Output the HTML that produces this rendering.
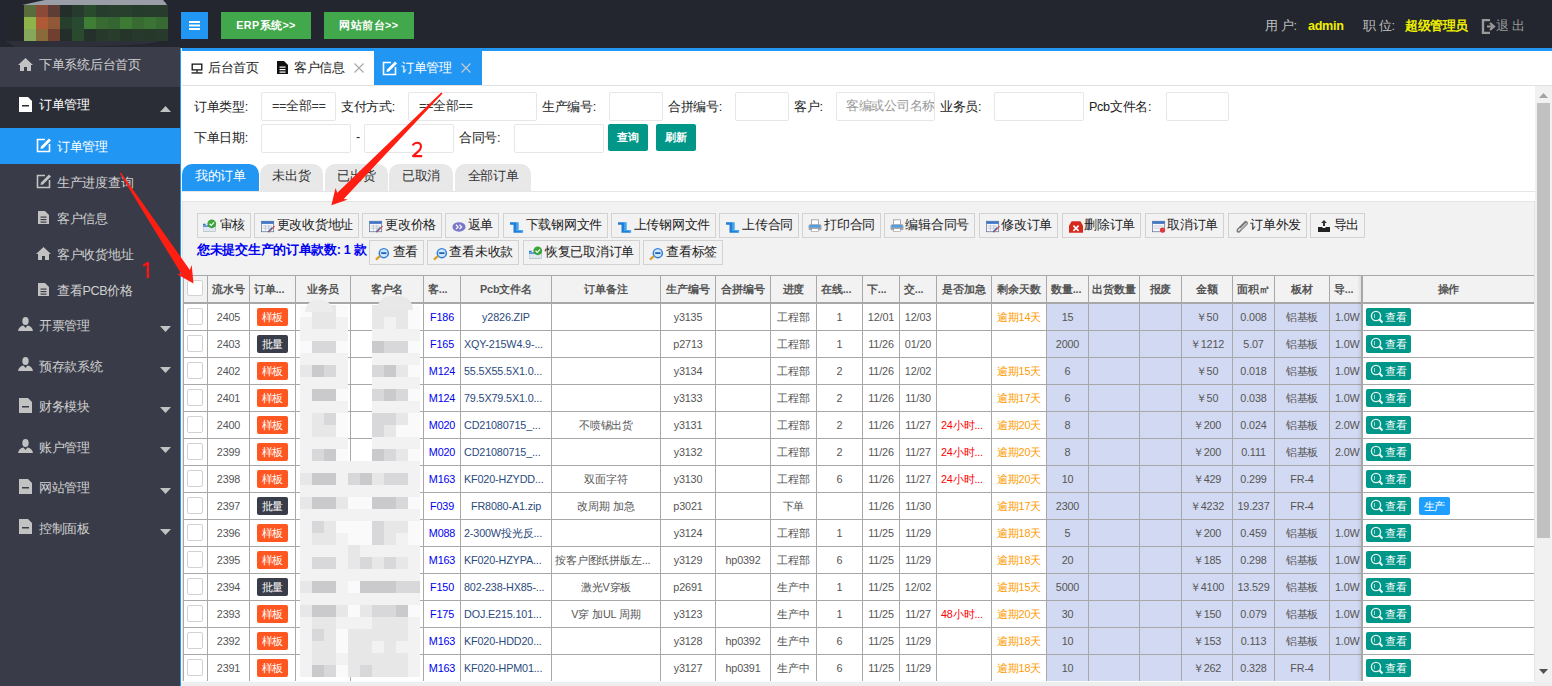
<!DOCTYPE html><html><head><meta charset="utf-8"><style>
*{box-sizing:border-box;margin:0;padding:0}
html,body{width:1552px;height:686px;overflow:hidden;background:#fff;font-family:"Liberation Sans",sans-serif;color:#333;letter-spacing:-0.3px}
.a{position:absolute}
#hdr{left:0;top:0;width:1552px;height:47px;background:#23262e}
.hb{top:12px;height:27px;background:#41a84c;color:#fff;font-size:10.8px;font-weight:bold;letter-spacing:0.4px;text-align:center;line-height:27px}
#side{left:0;top:47px;width:180px;height:639px;background:#393c48}
.si{left:0;width:180px;color:#d0d0d0;font-size:12.6px}
.si span{position:absolute;white-space:nowrap}
#main{left:180px;top:47px;width:1372px;height:639px;background:#fff}
.lbl{font-size:12.6px;color:#222;white-space:nowrap}
.inp{border-radius:2px;border:1px solid #e6e6e6;background:#fff;height:28px;font-size:12.6px;line-height:26px;white-space:nowrap;overflow:hidden}
.tb{height:25px;border:1px solid #d2d2d2;background:#f2f2f2;font-size:12.6px;color:#222;line-height:23px;white-space:nowrap}
.tb svg{position:absolute;left:5px;top:4px}
.tb span{position:absolute;top:0}
.cell{position:absolute;text-align:center;font-size:10.8px;letter-spacing:-0.15px;white-space:nowrap;overflow:hidden;color:#555}
</style></head><body><div id="hdr" class="a">
<svg class="a" style="left:0;top:0" width="180" height="47">
<path d="M5 41 L160 41 Q150 46 60 47 L15 47 Z" fill="#2d3039"/>
<path d="M22 5 L45 0 L163 0 Q166 3 167 5 Z" fill="#9a9ea6"/>
<rect x="12" y="5" width="12" height="12" fill="#23262e"/>
<rect x="24" y="5" width="12" height="12" fill="#5a6b3c"/>
<rect x="36" y="5" width="12" height="12" fill="#8b4a38"/>
<rect x="48" y="5" width="12" height="12" fill="#5e3d36"/>
<rect x="60" y="5" width="12" height="12" fill="#232e2a"/>
<rect x="72" y="5" width="12" height="12" fill="#263b2e"/>
<rect x="84" y="5" width="12" height="12" fill="#2a4a2e"/>
<rect x="96" y="5" width="12" height="12" fill="#263c2c"/>
<rect x="108" y="5" width="12" height="12" fill="#283f2d"/>
<rect x="120" y="5" width="12" height="12" fill="#283f2e"/>
<rect x="132" y="5" width="12" height="12" fill="#263b2c"/>
<rect x="144" y="5" width="12" height="12" fill="#273c2c"/>
<rect x="156" y="5" width="12" height="12" fill="#273c2c"/>
<rect x="12" y="17" width="12" height="12" fill="#23272a"/>
<rect x="24" y="17" width="12" height="12" fill="#8db34a"/>
<rect x="36" y="17" width="12" height="12" fill="#b05a35"/>
<rect x="48" y="17" width="12" height="12" fill="#915838"/>
<rect x="60" y="17" width="12" height="12" fill="#263f2d"/>
<rect x="72" y="17" width="12" height="12" fill="#284a30"/>
<rect x="84" y="17" width="12" height="12" fill="#3e7f35"/>
<rect x="96" y="17" width="12" height="12" fill="#376b32"/>
<rect x="108" y="17" width="12" height="12" fill="#356631"/>
<rect x="120" y="17" width="12" height="12" fill="#3d7b35"/>
<rect x="132" y="17" width="12" height="12" fill="#376b32"/>
<rect x="144" y="17" width="12" height="12" fill="#3a7334"/>
<rect x="156" y="17" width="12" height="12" fill="#376a32"/>
<rect x="12" y="29" width="12" height="12" fill="#23262b"/>
<rect x="24" y="29" width="12" height="12" fill="#85a85a"/>
<rect x="36" y="29" width="12" height="12" fill="#8b6a3a"/>
<rect x="48" y="29" width="12" height="12" fill="#713f30"/>
<rect x="60" y="29" width="12" height="12" fill="#232e2a"/>
<rect x="72" y="29" width="12" height="12" fill="#2a4a2e"/>
<rect x="84" y="29" width="12" height="12" fill="#24312a"/>
<rect x="96" y="29" width="12" height="12" fill="#27392b"/>
<rect x="108" y="29" width="12" height="12" fill="#283d2c"/>
<rect x="120" y="29" width="12" height="12" fill="#25352a"/>
<rect x="132" y="29" width="12" height="12" fill="#27392b"/>
<rect x="144" y="29" width="12" height="12" fill="#263829"/>
<rect x="156" y="29" width="12" height="12" fill="#273a2b"/>
</svg>
<div class="a" style="left:181px;top:12px;width:27px;height:27px;background:#2196f3"><svg class="a" style="left:8px;top:8px" width="11" height="11"><rect x="0" y="1" width="11" height="2" fill="#fff"/><rect x="0" y="4.5" width="11" height="2" fill="#fff"/><rect x="0" y="8" width="11" height="2" fill="#fff"/></svg></div>
<div class="a hb" style="left:221px;width:90px">ERP系统&gt;&gt;</div>
<div class="a hb" style="left:324px;width:90px">网站前台&gt;&gt;</div>
<div class="a" style="left:1265px;top:17px;font-size:12.6px;color:#c2c2c2;white-space:nowrap;line-height:18px">用 户:</div>
<div class="a" style="left:1308px;top:17px;font-size:12.6px;font-weight:bold;color:#f0f000;white-space:nowrap;line-height:18px">admin</div>
<div class="a" style="left:1363px;top:17px;font-size:12.6px;color:#c2c2c2;white-space:nowrap;line-height:18px">职 位:</div>
<div class="a" style="left:1405px;top:17px;font-size:12.6px;font-weight:bold;color:#f0f000;white-space:nowrap;line-height:18px;letter-spacing:-0.4px">超级管理员</div>
<svg class="a" style="left:1481px;top:19px" width="15" height="15"><path d="M9 1 H2 V14 H9" fill="none" stroke="#9a9a9a" stroke-width="2.4"/><path d="M6 7.5 H11 M9 4 L13 7.5 L9 11" fill="none" stroke="#9a9a9a" stroke-width="2.2"/></svg>
<div class="a" style="left:1496px;top:17px;font-size:12.6px;color:#9a9a9a;white-space:nowrap;line-height:18px">退 出</div>
</div>
<div id="side" class="a">
<div class="a" style="left:0;top:0;width:180px;height:40px;background:#3b3e4a"></div>
<div class="a" style="left:0;top:40px;width:180px;height:41px;background:#2a2d36"></div>
<div class="a" style="left:0;top:81px;width:180px;height:36px;background:#2196f3"></div>
<svg class="a" style="left:18px;top:11px" width="15" height="13"><path d="M7.5 0 L15 7 L13 7 L13 13 L9 13 L9 9 L6 9 L6 13 L2 13 L2 7 L0 7 Z" fill="#c2c2c2"/></svg>
<div class="a si" style="top:0;height:40px"><span style="left:39px;top:10px">下单系统后台首页</span></div>
<svg class="a" style="left:19px;top:50px" width="13" height="15"><path d="M0 0 H9 L13 4 V15 H0 Z" fill="#fff"/><rect x="3" y="8" width="7" height="1.5" fill="#2a2d36"/></svg>
<div class="a si" style="top:40px;height:40px;color:#fff"><span style="left:39px;top:10px">订单管理</span></div>
<svg class="a" style="left:160px;top:59px" width="11" height="6"><path d="M0 6 L5.5 0 L11 6 Z" fill="#c2c2c2"/></svg>
<svg class="a" style="left:36px;top:91px" width="15" height="15"><path d="M9 1.5 H1.5 V13.5 H13.5 V6" fill="none" stroke="#fff" stroke-width="1.6"/><path d="M13 0.5 L15 2.5 L7 10.5 L4.5 11 L5 8.5 Z" fill="#fff"/></svg>
<div class="a si" style="top:81px;height:36px;color:#fff"><span style="left:57px;top:11px">订单管理</span></div>
<svg class="a" style="left:36px;top:127px" width="15" height="15"><path d="M9 1.5 H1.5 V13.5 H13.5 V6" fill="none" stroke="#c2c2c2" stroke-width="1.6"/><path d="M13 0.5 L15 2.5 L7 10.5 L4.5 11 L5 8.5 Z" fill="#c2c2c2"/></svg>
<div class="a si" style="top:117px;height:36px"><span style="left:57px;top:11px">生产进度查询</span></div>
<svg class="a" style="left:38px;top:164px" width="11" height="13"><path d="M0 0 H7 L11 4 V13 H0 Z" fill="#c2c2c2"/><rect x="2.5" y="5.5" width="6" height="1.2" fill="#393c48"/><rect x="2.5" y="8" width="6" height="1.2" fill="#393c48"/><rect x="2.5" y="10.5" width="6" height="1.2" fill="#393c48"/></svg>
<div class="a si" style="top:153px;height:36px"><span style="left:57px;top:11px">客户信息</span></div>
<svg class="a" style="left:36px;top:200px" width="15" height="13"><path d="M7.5 0 L15 7 L13 7 L13 13 L9 13 L9 9 L6 9 L6 13 L2 13 L2 7 L0 7 Z" fill="#c2c2c2"/></svg>
<div class="a si" style="top:189px;height:36px"><span style="left:57px;top:11px">客户收货地址</span></div>
<svg class="a" style="left:38px;top:236px" width="11" height="13"><path d="M0 0 H7 L11 4 V13 H0 Z" fill="#c2c2c2"/><rect x="2.5" y="5.5" width="6" height="1.2" fill="#393c48"/><rect x="2.5" y="8" width="6" height="1.2" fill="#393c48"/><rect x="2.5" y="10.5" width="6" height="1.2" fill="#393c48"/></svg>
<div class="a si" style="top:225px;height:36px"><span style="left:57px;top:11px">查看PCB价格</span></div>
<svg class="a" style="left:18px;top:270px" width="15" height="14"><ellipse cx="7.5" cy="4" rx="3.2" ry="4" fill="#c2c2c2"/><path d="M0 14 Q1 9 5.5 8.5 L7.5 11 L9.5 8.5 Q14 9 15 14 Z" fill="#c2c2c2"/></svg>
<div class="a si" style="top:261.0px;height:40px"><span style="left:39px;top:10px">开票管理</span></div>
<svg class="a" style="left:160px;top:279px" width="11" height="6"><path d="M0 0 L11 0 L5.5 6 Z" fill="#c2c2c2"/></svg>
<svg class="a" style="left:18px;top:310px" width="15" height="14"><ellipse cx="7.5" cy="4" rx="3.2" ry="4" fill="#c2c2c2"/><path d="M0 14 Q1 9 5.5 8.5 L7.5 11 L9.5 8.5 Q14 9 15 14 Z" fill="#c2c2c2"/></svg>
<div class="a si" style="top:301.5px;height:40px"><span style="left:39px;top:10px">预存款系统</span></div>
<svg class="a" style="left:160px;top:320px" width="11" height="6"><path d="M0 0 L11 0 L5.5 6 Z" fill="#c2c2c2"/></svg>
<svg class="a" style="left:19px;top:351px" width="13" height="15"><path d="M0 0 H9 L13 4 V15 H0 Z" fill="#c2c2c2"/><rect x="3" y="8" width="7" height="1.5" fill="#393c48"/></svg>
<div class="a si" style="top:342.0px;height:40px"><span style="left:39px;top:10px">财务模块</span></div>
<svg class="a" style="left:160px;top:360px" width="11" height="6"><path d="M0 0 L11 0 L5.5 6 Z" fill="#c2c2c2"/></svg>
<svg class="a" style="left:18px;top:392px" width="15" height="14"><ellipse cx="7.5" cy="4" rx="3.2" ry="4" fill="#c2c2c2"/><path d="M0 14 Q1 9 5.5 8.5 L7.5 11 L9.5 8.5 Q14 9 15 14 Z" fill="#c2c2c2"/></svg>
<div class="a si" style="top:382.5px;height:40px"><span style="left:39px;top:10px">账户管理</span></div>
<svg class="a" style="left:160px;top:400px" width="11" height="6"><path d="M0 0 L11 0 L5.5 6 Z" fill="#c2c2c2"/></svg>
<svg class="a" style="left:19px;top:432px" width="13" height="15"><path d="M0 0 H9 L13 4 V15 H0 Z" fill="#c2c2c2"/><rect x="3" y="8" width="7" height="1.5" fill="#393c48"/></svg>
<div class="a si" style="top:423.0px;height:40px"><span style="left:39px;top:10px">网站管理</span></div>
<svg class="a" style="left:160px;top:441px" width="11" height="6"><path d="M0 0 L11 0 L5.5 6 Z" fill="#c2c2c2"/></svg>
<svg class="a" style="left:19px;top:472px" width="13" height="15"><path d="M0 0 H9 L13 4 V15 H0 Z" fill="#c2c2c2"/><rect x="3" y="8" width="7" height="1.5" fill="#393c48"/></svg>
<div class="a si" style="top:463.5px;height:40px"><span style="left:39px;top:10px">控制面板</span></div>
<svg class="a" style="left:160px;top:482px" width="11" height="6"><path d="M0 0 L11 0 L5.5 6 Z" fill="#c2c2c2"/></svg>
</div>
<div class="a" style="left:180px;top:47px;width:1372px;height:1px;background:#23262e"></div>
<div class="a" style="left:180px;top:48px;width:1px;height:638px;background:#2196f3"></div>
<div class="a" style="left:182px;top:48px;width:1370px;height:3px;background:#2196f3"></div>
<div class="a" style="left:182px;top:85px;width:1370px;height:1px;background:#e2e2e2"></div>
<svg class="a" style="left:191px;top:63px" width="12" height="11"><path d="M1.2 1.2 H10.8 V6.8 H1.2 Z" fill="none" stroke="#111" stroke-width="1.3"/><path d="M6 7 V9.5" stroke="#111" stroke-width="1.2"/><rect x="0.5" y="9.3" width="11" height="1.3" fill="#111"/></svg>
<div class="a" style="left:208px;top:59px;font-size:12.6px;color:#1a1a1a;white-space:nowrap;margin-top:1px">后台首页</div>
<svg class="a" style="left:277px;top:61px" width="11" height="13"><path d="M0 0 H7 L11 4 V13 H0 Z" fill="#111"/><rect x="2.5" y="5.5" width="6" height="1.2" fill="#fff"/><rect x="2.5" y="8" width="6" height="1.2" fill="#fff"/><rect x="2.5" y="10.5" width="6" height="1.2" fill="#fff"/></svg>
<div class="a" style="left:294px;top:59px;font-size:12.6px;color:#1a1a1a;white-space:nowrap;margin-top:1px">客户信息</div>
<svg class="a" style="left:354px;top:63px" width="10" height="10"><path d="M0.5 0.5 L9.5 9.5 M9.5 0.5 L0.5 9.5" stroke="#aaa" stroke-width="1.2"/></svg>
<div class="a" style="left:374px;top:51px;width:108px;height:34px;background:#2196f3"></div>
<svg class="a" style="left:382px;top:61px" width="15" height="15"><path d="M9 1.5 H1.5 V13.5 H13.5 V6" fill="none" stroke="#fff" stroke-width="1.6"/><path d="M13 0.5 L15 2.5 L7 10.5 L4.5 11 L5 8.5 Z" fill="#fff"/></svg>
<div class="a" style="left:401px;top:59px;font-size:12.6px;color:#fff;white-space:nowrap;margin-top:1px">订单管理</div>
<svg class="a" style="left:461px;top:63px" width="10" height="10"><path d="M0.5 0.5 L9.5 9.5 M9.5 0.5 L0.5 9.5" stroke="#c4cbd2" stroke-width="1.2"/></svg>
<div class="a lbl" style="left:194px;top:99px">订单类型:</div>
<div class="a inp" style="left:261px;top:92px;width:75px;height:29px;color:#333;padding-left:10px">==全部==</div>
<div class="a lbl" style="left:341px;top:99px">支付方式:</div>
<div class="a inp" style="left:408px;top:92px;width:129px;height:29px;color:#333;padding-left:10px">==全部==</div>
<div class="a lbl" style="left:542px;top:99px">生产编号:</div>
<div class="a inp" style="left:609px;top:92px;width:54px;height:29px;color:#333;padding-left:8px"></div>
<div class="a lbl" style="left:668px;top:99px">合拼编号:</div>
<div class="a inp" style="left:735px;top:92px;width:54px;height:29px;color:#333;padding-left:8px"></div>
<div class="a lbl" style="left:794px;top:99px">客户:</div>
<div class="a inp" style="left:836px;top:92px;width:99px;height:29px;color:#999;padding-left:9px">客编或公司名称</div>
<div class="a lbl" style="left:940px;top:99px">业务员:</div>
<div class="a inp" style="left:994px;top:92px;width:90px;height:29px;color:#333;padding-left:8px"></div>
<div class="a lbl" style="left:1089px;top:99px">Pcb文件名:</div>
<div class="a inp" style="left:1166px;top:92px;width:63px;height:29px;color:#333;padding-left:8px"></div>
<div class="a lbl" style="left:194px;top:130px">下单日期:</div>
<div class="a inp" style="left:261px;top:124px;width:90px;height:29px;color:#333;padding-left:8px"></div>
<div class="a lbl" style="left:356px;top:130px">-</div>
<div class="a inp" style="left:364px;top:124px;width:90px;height:29px;color:#333;padding-left:8px"></div>
<div class="a lbl" style="left:459px;top:130px">合同号:</div>
<div class="a inp" style="left:514px;top:124px;width:90px;height:29px;color:#333;padding-left:8px"></div>
<div class="a" style="left:608px;top:124px;width:40px;height:27px;background:#009688;border-radius:2px;color:#fff;font-size:11px;font-weight:bold;text-align:center;line-height:27px">查询</div>
<div class="a" style="left:656px;top:124px;width:40px;height:27px;background:#009688;border-radius:2px;color:#fff;font-size:11px;font-weight:bold;text-align:center;line-height:27px">刷新</div>
<div class="a" style="left:182px;top:191px;width:1353px;height:1px;background:#e6e6e6"></div>
<div class="a" style="left:182px;top:164px;width:77px;height:27px;background:#2196f3;border-radius:10px 10px 0 0;color:#fff;font-size:12.6px;text-align:center;line-height:25px">我的订单</div>
<div class="a" style="left:260px;top:164px;width:63px;height:27px;background:#e8e8e8;border-radius:10px 10px 0 0;color:#333;font-size:12.6px;text-align:center;line-height:25px">未出货</div>
<div class="a" style="left:325px;top:164px;width:63px;height:27px;background:#e8e8e8;border-radius:10px 10px 0 0;color:#333;font-size:12.6px;text-align:center;line-height:25px">已出货</div>
<div class="a" style="left:389px;top:164px;width:64px;height:27px;background:#e8e8e8;border-radius:10px 10px 0 0;color:#333;font-size:12.6px;text-align:center;line-height:25px">已取消</div>
<div class="a" style="left:455px;top:164px;width:76px;height:27px;background:#e8e8e8;border-radius:10px 10px 0 0;color:#333;font-size:12.6px;text-align:center;line-height:25px">全部订单</div>
<div class="a" style="left:182px;top:201px;width:1353px;height:481px;background:#f2f2f2;border:1px solid #e4e4e4;border-bottom:0"></div>
<div class="a tb" style="left:197px;top:213px;width:54px"><svg class="a" style="left:5px;top:5px" width="14" height="13" viewBox="0 0 16 14"><rect x="0" y="5" width="3" height="2" fill="#2a7bd6"/><rect x="0" y="7" width="14" height="7" fill="#dfe7f0" stroke="#9aa" stroke-width="0.6"/><rect x="0" y="7" width="14" height="1.5" fill="#3a86d8"/><circle cx="10" cy="5" r="5" fill="#3aa53a"/><path d="M7.5 5 L9.5 7 L12.5 3.5" stroke="#fff" stroke-width="1.3" fill="none"/></svg><span style="right:5px">审核</span></div>
<div class="a tb" style="left:254px;top:213px;width:105px"><svg class="a" style="left:6px;top:6px" width="14" height="13" viewBox="0 0 16 14"><rect x="0.5" y="1" width="14" height="12" fill="#f4f6fa" stroke="#5a6f90" stroke-width="0.8"/><rect x="0.5" y="1" width="14" height="3" fill="#3f75c4"/><path d="M2 6.5 H13 M2 9 H13 M5 5 V12 M9 5 V12" stroke="#aab" stroke-width="0.6"/><path d="M8 13 L15 6 L16 7 L9 14 Z" fill="#e04a2a"/><path d="M8 13 L13 8" stroke="#2a6ad0" stroke-width="1.2"/></svg><span style="right:5px">更改收货地址</span></div>
<div class="a tb" style="left:362px;top:213px;width:80px"><svg class="a" style="left:6px;top:6px" width="14" height="13" viewBox="0 0 16 14"><rect x="0.5" y="1" width="14" height="12" fill="#f4f6fa" stroke="#5a6f90" stroke-width="0.8"/><rect x="0.5" y="1" width="14" height="3" fill="#3f75c4"/><path d="M2 6.5 H13 M2 9 H13 M5 5 V12 M9 5 V12" stroke="#aab" stroke-width="0.6"/><path d="M8 13 L15 6 L16 7 L9 14 Z" fill="#e04a2a"/><path d="M8 13 L13 8" stroke="#2a6ad0" stroke-width="1.2"/></svg><span style="right:5px">更改价格</span></div>
<div class="a tb" style="left:445px;top:213px;width:54px"><svg class="a" style="left:6px;top:7px" width="14" height="11" viewBox="0 0 16 12"><ellipse cx="8" cy="6.5" rx="7.5" ry="5.5" fill="#7a76c8"/><path d="M4.5 4 L7 6.5 L4.5 9 M8.5 4 L11 6.5 L8.5 9" stroke="#fff" stroke-width="1.4" fill="none"/></svg><span style="right:5px">返单</span></div>
<div class="a tb" style="left:503px;top:213px;width:105px"><svg class="a" style="left:6px;top:6px" width="14" height="13" viewBox="0 0 16 14"><path d="M0 2 H8 V12 H14 V14 H4 V5 H0 Z" fill="#1e7fd8"/><path d="M7 2 H10 V11 H15 V14 H13 V12 H7 Z" fill="#47a6f0"/></svg><span style="right:5px">下载钢网文件</span></div>
<div class="a tb" style="left:611px;top:213px;width:105px"><svg class="a" style="left:6px;top:6px" width="14" height="13" viewBox="0 0 16 14"><path d="M0 2 H8 V12 H14 V14 H4 V5 H0 Z" fill="#1e7fd8"/><path d="M7 2 H10 V11 H15 V14 H13 V12 H7 Z" fill="#47a6f0"/></svg><span style="right:5px">上传钢网文件</span></div>
<div class="a tb" style="left:719px;top:213px;width:80px"><svg class="a" style="left:6px;top:6px" width="14" height="13" viewBox="0 0 16 14"><path d="M0 2 H8 V12 H14 V14 H4 V5 H0 Z" fill="#1e7fd8"/><path d="M7 2 H10 V11 H15 V14 H13 V12 H7 Z" fill="#47a6f0"/></svg><span style="right:5px">上传合同</span></div>
<div class="a tb" style="left:802px;top:213px;width:79px"><svg class="a" style="left:5px;top:5px" width="14" height="13" viewBox="0 0 16 15"><rect x="4" y="1" width="8" height="6" fill="#fff" stroke="#888" stroke-width="0.8"/><rect x="0.5" y="6" width="15" height="7" rx="2" fill="#9aa4b0"/><rect x="2" y="7" width="12" height="2.5" fill="#48a0e8"/><rect x="4" y="11" width="8" height="3.5" fill="#fff" stroke="#888" stroke-width="0.6"/></svg><span style="right:5px">打印合同</span></div>
<div class="a tb" style="left:884px;top:213px;width:91px"><svg class="a" style="left:5px;top:5px" width="14" height="13" viewBox="0 0 16 15"><rect x="4" y="1" width="8" height="6" fill="#fff" stroke="#888" stroke-width="0.8"/><rect x="0.5" y="6" width="15" height="7" rx="2" fill="#9aa4b0"/><rect x="2" y="7" width="12" height="2.5" fill="#48a0e8"/><rect x="4" y="11" width="8" height="3.5" fill="#fff" stroke="#888" stroke-width="0.6"/></svg><span style="right:5px">编辑合同号</span></div>
<div class="a tb" style="left:979px;top:213px;width:79px"><svg class="a" style="left:6px;top:6px" width="14" height="13" viewBox="0 0 16 14"><rect x="0.5" y="1" width="14" height="12" fill="#f4f6fa" stroke="#5a6f90" stroke-width="0.8"/><rect x="0.5" y="1" width="14" height="3" fill="#3f75c4"/><path d="M2 6.5 H13 M2 9 H13 M5 5 V12 M9 5 V12" stroke="#aab" stroke-width="0.6"/><path d="M8 13 L15 6 L16 7 L9 14 Z" fill="#e04a2a"/><path d="M8 13 L13 8" stroke="#2a6ad0" stroke-width="1.2"/></svg><span style="right:5px">修改订单</span></div>
<div class="a tb" style="left:1062px;top:213px;width:79px"><svg class="a" style="left:6px;top:6px" width="14" height="13" viewBox="0 0 16 14"><path d="M0 6 L3 1 H13 L16 6 V14 H0 Z" fill="#d8271b"/><path d="M5 6 L11 12 M11 6 L5 12" stroke="#fff" stroke-width="1.8"/></svg><span style="right:5px">删除订单</span></div>
<div class="a tb" style="left:1145px;top:213px;width:79px"><svg class="a" style="left:6px;top:6px" width="14" height="13" viewBox="0 0 16 14"><rect x="0.5" y="1" width="14" height="12" fill="#f4f6fa" stroke="#5a6f90" stroke-width="0.8"/><rect x="0.5" y="1" width="14" height="3" fill="#3f75c4"/><path d="M2 6.5 H13 M2 9 H13" stroke="#aab" stroke-width="0.6"/><circle cx="12" cy="11" r="3" fill="#e03a3a"/></svg><span style="right:5px">取消订单</span></div>
<div class="a tb" style="left:1228px;top:213px;width:79px"><svg class="a" style="left:6px;top:5px" width="15" height="15"><path d="M11 2 L3 10 Q1 13 4 13 L12 5 Q13 3 11 3 L5 9" fill="none" stroke="#777" stroke-width="1.4"/><path d="M13 4 L6 11" stroke="#999" stroke-width="1"/></svg><span style="right:5px">订单外发</span></div>
<div class="a tb" style="left:1310px;top:213px;width:55px"><svg class="a" style="left:7px;top:6px" width="12" height="12"><path d="M6 0 L9 3 H7 V6 H5 V3 H3 Z" fill="#333"/><path d="M0 7 H4 L5 8 H7 L8 7 H12 V12 H0 Z" fill="#222"/></svg><span style="right:5px">导出</span></div>
<div class="a" style="left:197px;top:241px;font-size:12.6px;font-weight:bold;color:#0000f0;white-space:nowrap;line-height:18px">您未提交生产的订单款数: 1 款</div>
<div class="a tb" style="left:369px;top:240px;width:55px"><svg class="a" style="left:5px;top:6px" width="15" height="14" viewBox="0 0 17 16"><circle cx="10" cy="7" r="6" fill="#2f7ed8"/><circle cx="10" cy="7" r="4.3" fill="#cfe6fb"/><rect x="7" y="6" width="6" height="2" fill="#1f5fb8"/><path d="M1 14.5 L5.5 10.5" stroke="#d9a02a" stroke-width="2.6"/></svg><span style="right:5px">查看</span></div>
<div class="a tb" style="left:427px;top:240px;width:92px"><svg class="a" style="left:5px;top:6px" width="15" height="14" viewBox="0 0 17 16"><circle cx="10" cy="7" r="6" fill="#2f7ed8"/><circle cx="10" cy="7" r="4.3" fill="#cfe6fb"/><rect x="7" y="6" width="6" height="2" fill="#1f5fb8"/><path d="M1 14.5 L5.5 10.5" stroke="#d9a02a" stroke-width="2.6"/></svg><span style="right:5px">查看未收款</span></div>
<div class="a tb" style="left:523px;top:240px;width:117px"><svg class="a" style="left:5px;top:5px" width="14" height="13" viewBox="0 0 16 14"><rect x="0" y="5" width="3" height="2" fill="#2a7bd6"/><rect x="0" y="7" width="14" height="7" fill="#dfe7f0" stroke="#9aa" stroke-width="0.6"/><rect x="0" y="7" width="14" height="1.5" fill="#3a86d8"/><circle cx="10" cy="5" r="5" fill="#3aa53a"/><path d="M7.5 5 L9.5 7 L12.5 3.5" stroke="#fff" stroke-width="1.3" fill="none"/></svg><span style="right:5px">恢复已取消订单</span></div>
<div class="a tb" style="left:643px;top:240px;width:80px"><svg class="a" style="left:5px;top:6px" width="15" height="14" viewBox="0 0 17 16"><circle cx="10" cy="7" r="6" fill="#2f7ed8"/><circle cx="10" cy="7" r="4.3" fill="#cfe6fb"/><rect x="7" y="6" width="6" height="2" fill="#1f5fb8"/><path d="M1 14.5 L5.5 10.5" stroke="#d9a02a" stroke-width="2.6"/></svg><span style="right:5px">查看标签</span></div>
<div class="a" style="left:183px;top:275px;width:1178px;height:28px;background:#f2f2f2"></div>
<div class="a" style="left:183px;top:303px;width:1178px;height:378px;background:#fff"></div>
<div class="a" style="left:1046px;top:303px;width:315px;height:378px;background:#d2d9f2"></div>
<div class="a" style="left:183px;top:275px;width:1178px;height:1px;background:#a8a8a8"></div>
<div class="a" style="left:183px;top:303px;width:1178px;height:1px;background:#a8a8a8"></div>
<div class="a" style="left:183px;top:330px;width:1178px;height:1px;background:#a8a8a8"></div>
<div class="a" style="left:183px;top:357px;width:1178px;height:1px;background:#a8a8a8"></div>
<div class="a" style="left:183px;top:384px;width:1178px;height:1px;background:#a8a8a8"></div>
<div class="a" style="left:183px;top:411px;width:1178px;height:1px;background:#a8a8a8"></div>
<div class="a" style="left:183px;top:438px;width:1178px;height:1px;background:#a8a8a8"></div>
<div class="a" style="left:183px;top:465px;width:1178px;height:1px;background:#a8a8a8"></div>
<div class="a" style="left:183px;top:492px;width:1178px;height:1px;background:#a8a8a8"></div>
<div class="a" style="left:183px;top:519px;width:1178px;height:1px;background:#a8a8a8"></div>
<div class="a" style="left:183px;top:546px;width:1178px;height:1px;background:#a8a8a8"></div>
<div class="a" style="left:183px;top:573px;width:1178px;height:1px;background:#a8a8a8"></div>
<div class="a" style="left:183px;top:600px;width:1178px;height:1px;background:#a8a8a8"></div>
<div class="a" style="left:183px;top:627px;width:1178px;height:1px;background:#a8a8a8"></div>
<div class="a" style="left:183px;top:654px;width:1178px;height:1px;background:#a8a8a8"></div>
<div class="a" style="left:183px;top:681px;width:1178px;height:1px;background:#a8a8a8"></div>
<div class="a" style="left:183px;top:302px;width:1178px;height:1px;background:#a8a8a8"></div>
<div class="a" style="left:183px;top:275px;width:1px;height:406px;background:#a8a8a8"></div>
<div class="a" style="left:207px;top:275px;width:1px;height:406px;background:#a8a8a8"></div>
<div class="a" style="left:249px;top:275px;width:1px;height:406px;background:#a8a8a8"></div>
<div class="a" style="left:295px;top:275px;width:1px;height:406px;background:#a8a8a8"></div>
<div class="a" style="left:350px;top:275px;width:1px;height:406px;background:#a8a8a8"></div>
<div class="a" style="left:423px;top:275px;width:1px;height:406px;background:#a8a8a8"></div>
<div class="a" style="left:460px;top:275px;width:1px;height:406px;background:#a8a8a8"></div>
<div class="a" style="left:551px;top:275px;width:1px;height:406px;background:#a8a8a8"></div>
<div class="a" style="left:660px;top:275px;width:1px;height:406px;background:#a8a8a8"></div>
<div class="a" style="left:715px;top:275px;width:1px;height:406px;background:#a8a8a8"></div>
<div class="a" style="left:770px;top:275px;width:1px;height:406px;background:#a8a8a8"></div>
<div class="a" style="left:816px;top:275px;width:1px;height:406px;background:#a8a8a8"></div>
<div class="a" style="left:862px;top:275px;width:1px;height:406px;background:#a8a8a8"></div>
<div class="a" style="left:899px;top:275px;width:1px;height:406px;background:#a8a8a8"></div>
<div class="a" style="left:936px;top:275px;width:1px;height:406px;background:#a8a8a8"></div>
<div class="a" style="left:991px;top:275px;width:1px;height:406px;background:#a8a8a8"></div>
<div class="a" style="left:1046px;top:275px;width:1px;height:406px;background:#a8a8a8"></div>
<div class="a" style="left:1088px;top:275px;width:1px;height:406px;background:#a8a8a8"></div>
<div class="a" style="left:1139px;top:275px;width:1px;height:406px;background:#a8a8a8"></div>
<div class="a" style="left:1181px;top:275px;width:1px;height:406px;background:#a8a8a8"></div>
<div class="a" style="left:1232px;top:275px;width:1px;height:406px;background:#a8a8a8"></div>
<div class="a" style="left:1274px;top:275px;width:1px;height:406px;background:#a8a8a8"></div>
<div class="a" style="left:1329px;top:275px;width:1px;height:406px;background:#a8a8a8"></div>
<div class="a" style="left:187px;top:280px;width:16px;height:16px;border:1px solid #d2d2d2;border-radius:2px;background:#fff"></div>
<div class="cell" style="left:208px;top:276px;width:41px;height:27px;line-height:27px;font-weight:bold;color:#555;text-align:center;">流水号</div>
<div class="cell" style="left:250px;top:276px;width:45px;height:27px;line-height:27px;font-weight:bold;color:#555;text-align:left;padding-left:4px;">订单...</div>
<div class="cell" style="left:296px;top:276px;width:54px;height:27px;line-height:27px;font-weight:bold;color:#555;text-align:center;">业务员</div>
<div class="cell" style="left:351px;top:276px;width:72px;height:27px;line-height:27px;font-weight:bold;color:#555;text-align:center;">客户名</div>
<div class="cell" style="left:424px;top:276px;width:36px;height:27px;line-height:27px;font-weight:bold;color:#555;text-align:left;padding-left:4px;">客...</div>
<div class="cell" style="left:461px;top:276px;width:90px;height:27px;line-height:27px;font-weight:bold;color:#555;text-align:center;">Pcb文件名</div>
<div class="cell" style="left:552px;top:276px;width:108px;height:27px;line-height:27px;font-weight:bold;color:#555;text-align:center;">订单备注</div>
<div class="cell" style="left:661px;top:276px;width:54px;height:27px;line-height:27px;font-weight:bold;color:#555;text-align:center;">生产编号</div>
<div class="cell" style="left:716px;top:276px;width:54px;height:27px;line-height:27px;font-weight:bold;color:#555;text-align:center;">合拼编号</div>
<div class="cell" style="left:771px;top:276px;width:45px;height:27px;line-height:27px;font-weight:bold;color:#555;text-align:center;">进度</div>
<div class="cell" style="left:817px;top:276px;width:45px;height:27px;line-height:27px;font-weight:bold;color:#555;text-align:left;padding-left:4px;">在线...</div>
<div class="cell" style="left:863px;top:276px;width:36px;height:27px;line-height:27px;font-weight:bold;color:#555;text-align:left;padding-left:4px;">下...</div>
<div class="cell" style="left:900px;top:276px;width:36px;height:27px;line-height:27px;font-weight:bold;color:#555;text-align:left;padding-left:4px;">交...</div>
<div class="cell" style="left:937px;top:276px;width:54px;height:27px;line-height:27px;font-weight:bold;color:#555;text-align:center;">是否加急</div>
<div class="cell" style="left:992px;top:276px;width:54px;height:27px;line-height:27px;font-weight:bold;color:#555;text-align:center;">剩余天数</div>
<div class="cell" style="left:1047px;top:276px;width:41px;height:27px;line-height:27px;font-weight:bold;color:#555;text-align:left;padding-left:4px;">数量...</div>
<div class="cell" style="left:1089px;top:276px;width:50px;height:27px;line-height:27px;font-weight:bold;color:#555;text-align:center;">出货数量</div>
<div class="cell" style="left:1140px;top:276px;width:41px;height:27px;line-height:27px;font-weight:bold;color:#555;text-align:center;">报废</div>
<div class="cell" style="left:1182px;top:276px;width:50px;height:27px;line-height:27px;font-weight:bold;color:#555;text-align:center;">金额</div>
<div class="cell" style="left:1233px;top:276px;width:41px;height:27px;line-height:27px;font-weight:bold;color:#555;text-align:center;">面积㎡</div>
<div class="cell" style="left:1275px;top:276px;width:54px;height:27px;line-height:27px;font-weight:bold;color:#555;text-align:center;">板材</div>
<div class="cell" style="left:1330px;top:276px;width:70px;height:27px;line-height:27px;font-weight:bold;color:#555;text-align:left;padding-left:4px;">导...</div>
<div class="a" style="left:187px;top:308px;width:16px;height:17px;border:1px solid #d2d2d2;border-radius:2px;background:#fff"></div>
<div class="cell" style="left:208px;top:304px;width:41px;height:26px;line-height:26px;color:#555;text-align:center;">2405</div>
<div class="a" style="left:257px;top:308px;width:31px;height:18px;background:#ff5722;border-radius:2px;color:#fff;font-size:10.8px;text-align:center;line-height:18px">样板</div>
<div class="cell" style="left:424px;top:304px;width:36px;height:26px;line-height:26px;color:#0000f0;text-align:center;">F186</div>
<div class="cell" style="left:461px;top:304px;width:90px;height:26px;line-height:26px;color:#2b4a7d;text-align:center;">y2826.ZIP</div>
<div class="cell" style="left:661px;top:304px;width:54px;height:26px;line-height:26px;color:#555;text-align:center;">y3135</div>
<div class="cell" style="left:771px;top:304px;width:45px;height:26px;line-height:26px;color:#555;text-align:center;">工程部</div>
<div class="cell" style="left:817px;top:304px;width:45px;height:26px;line-height:26px;color:#555;text-align:center;">1</div>
<div class="cell" style="left:863px;top:304px;width:36px;height:26px;line-height:26px;color:#555;text-align:center;">12/01</div>
<div class="cell" style="left:900px;top:304px;width:36px;height:26px;line-height:26px;color:#555;text-align:center;">12/03</div>
<div class="cell" style="left:992px;top:304px;width:54px;height:26px;line-height:26px;color:#ff9b00;text-align:center;">逾期14天</div>
<div class="cell" style="left:1047px;top:304px;width:41px;height:26px;line-height:26px;color:#555;text-align:center;">15</div>
<div class="cell" style="left:1182px;top:304px;width:50px;height:26px;line-height:26px;color:#555;text-align:center;">￥50</div>
<div class="cell" style="left:1233px;top:304px;width:41px;height:26px;line-height:26px;color:#555;text-align:center;">0.008</div>
<div class="cell" style="left:1275px;top:304px;width:54px;height:26px;line-height:26px;color:#555;text-align:center;">铝基板</div>
<div class="cell" style="left:1330px;top:304px;width:70px;height:26px;line-height:26px;color:#555;text-align:left;padding-left:5px;">1.0W</div>
<div class="a" style="left:187px;top:335px;width:16px;height:17px;border:1px solid #d2d2d2;border-radius:2px;background:#fff"></div>
<div class="cell" style="left:208px;top:331px;width:41px;height:26px;line-height:26px;color:#555;text-align:center;">2403</div>
<div class="a" style="left:257px;top:335px;width:31px;height:18px;background:#393d49;border-radius:2px;color:#fff;font-size:10.8px;text-align:center;line-height:18px">批量</div>
<div class="cell" style="left:424px;top:331px;width:36px;height:26px;line-height:26px;color:#0000f0;text-align:center;">F165</div>
<div class="cell" style="left:461px;top:331px;width:90px;height:26px;line-height:26px;color:#2b4a7d;text-align:left;padding-left:3px;">XQY-215W4.9-...</div>
<div class="cell" style="left:661px;top:331px;width:54px;height:26px;line-height:26px;color:#555;text-align:center;">p2713</div>
<div class="cell" style="left:771px;top:331px;width:45px;height:26px;line-height:26px;color:#555;text-align:center;">工程部</div>
<div class="cell" style="left:817px;top:331px;width:45px;height:26px;line-height:26px;color:#555;text-align:center;">1</div>
<div class="cell" style="left:863px;top:331px;width:36px;height:26px;line-height:26px;color:#555;text-align:center;">11/26</div>
<div class="cell" style="left:900px;top:331px;width:36px;height:26px;line-height:26px;color:#555;text-align:center;">01/20</div>
<div class="cell" style="left:1047px;top:331px;width:41px;height:26px;line-height:26px;color:#555;text-align:center;">2000</div>
<div class="cell" style="left:1182px;top:331px;width:50px;height:26px;line-height:26px;color:#555;text-align:center;">￥1212</div>
<div class="cell" style="left:1233px;top:331px;width:41px;height:26px;line-height:26px;color:#555;text-align:center;">5.07</div>
<div class="cell" style="left:1275px;top:331px;width:54px;height:26px;line-height:26px;color:#555;text-align:center;">铝基板</div>
<div class="cell" style="left:1330px;top:331px;width:70px;height:26px;line-height:26px;color:#555;text-align:left;padding-left:5px;">1.0W</div>
<div class="a" style="left:187px;top:362px;width:16px;height:17px;border:1px solid #d2d2d2;border-radius:2px;background:#fff"></div>
<div class="cell" style="left:208px;top:358px;width:41px;height:26px;line-height:26px;color:#555;text-align:center;">2402</div>
<div class="a" style="left:257px;top:362px;width:31px;height:18px;background:#ff5722;border-radius:2px;color:#fff;font-size:10.8px;text-align:center;line-height:18px">样板</div>
<div class="cell" style="left:424px;top:358px;width:36px;height:26px;line-height:26px;color:#0000f0;text-align:center;">M124</div>
<div class="cell" style="left:461px;top:358px;width:90px;height:26px;line-height:26px;color:#2b4a7d;text-align:left;padding-left:3px;">55.5X55.5X1.0...</div>
<div class="cell" style="left:661px;top:358px;width:54px;height:26px;line-height:26px;color:#555;text-align:center;">y3134</div>
<div class="cell" style="left:771px;top:358px;width:45px;height:26px;line-height:26px;color:#555;text-align:center;">工程部</div>
<div class="cell" style="left:817px;top:358px;width:45px;height:26px;line-height:26px;color:#555;text-align:center;">2</div>
<div class="cell" style="left:863px;top:358px;width:36px;height:26px;line-height:26px;color:#555;text-align:center;">11/26</div>
<div class="cell" style="left:900px;top:358px;width:36px;height:26px;line-height:26px;color:#555;text-align:center;">12/02</div>
<div class="cell" style="left:992px;top:358px;width:54px;height:26px;line-height:26px;color:#ff9b00;text-align:center;">逾期15天</div>
<div class="cell" style="left:1047px;top:358px;width:41px;height:26px;line-height:26px;color:#555;text-align:center;">6</div>
<div class="cell" style="left:1182px;top:358px;width:50px;height:26px;line-height:26px;color:#555;text-align:center;">￥50</div>
<div class="cell" style="left:1233px;top:358px;width:41px;height:26px;line-height:26px;color:#555;text-align:center;">0.018</div>
<div class="cell" style="left:1275px;top:358px;width:54px;height:26px;line-height:26px;color:#555;text-align:center;">铝基板</div>
<div class="cell" style="left:1330px;top:358px;width:70px;height:26px;line-height:26px;color:#555;text-align:left;padding-left:5px;">1.0W</div>
<div class="a" style="left:187px;top:389px;width:16px;height:17px;border:1px solid #d2d2d2;border-radius:2px;background:#fff"></div>
<div class="cell" style="left:208px;top:385px;width:41px;height:26px;line-height:26px;color:#555;text-align:center;">2401</div>
<div class="a" style="left:257px;top:389px;width:31px;height:18px;background:#ff5722;border-radius:2px;color:#fff;font-size:10.8px;text-align:center;line-height:18px">样板</div>
<div class="cell" style="left:424px;top:385px;width:36px;height:26px;line-height:26px;color:#0000f0;text-align:center;">M124</div>
<div class="cell" style="left:461px;top:385px;width:90px;height:26px;line-height:26px;color:#2b4a7d;text-align:left;padding-left:3px;">79.5X79.5X1.0...</div>
<div class="cell" style="left:661px;top:385px;width:54px;height:26px;line-height:26px;color:#555;text-align:center;">y3133</div>
<div class="cell" style="left:771px;top:385px;width:45px;height:26px;line-height:26px;color:#555;text-align:center;">工程部</div>
<div class="cell" style="left:817px;top:385px;width:45px;height:26px;line-height:26px;color:#555;text-align:center;">2</div>
<div class="cell" style="left:863px;top:385px;width:36px;height:26px;line-height:26px;color:#555;text-align:center;">11/26</div>
<div class="cell" style="left:900px;top:385px;width:36px;height:26px;line-height:26px;color:#555;text-align:center;">11/30</div>
<div class="cell" style="left:992px;top:385px;width:54px;height:26px;line-height:26px;color:#ff9b00;text-align:center;">逾期17天</div>
<div class="cell" style="left:1047px;top:385px;width:41px;height:26px;line-height:26px;color:#555;text-align:center;">6</div>
<div class="cell" style="left:1182px;top:385px;width:50px;height:26px;line-height:26px;color:#555;text-align:center;">￥50</div>
<div class="cell" style="left:1233px;top:385px;width:41px;height:26px;line-height:26px;color:#555;text-align:center;">0.038</div>
<div class="cell" style="left:1275px;top:385px;width:54px;height:26px;line-height:26px;color:#555;text-align:center;">铝基板</div>
<div class="cell" style="left:1330px;top:385px;width:70px;height:26px;line-height:26px;color:#555;text-align:left;padding-left:5px;">1.0W</div>
<div class="a" style="left:187px;top:416px;width:16px;height:17px;border:1px solid #d2d2d2;border-radius:2px;background:#fff"></div>
<div class="cell" style="left:208px;top:412px;width:41px;height:26px;line-height:26px;color:#555;text-align:center;">2400</div>
<div class="a" style="left:257px;top:416px;width:31px;height:18px;background:#ff5722;border-radius:2px;color:#fff;font-size:10.8px;text-align:center;line-height:18px">样板</div>
<div class="cell" style="left:424px;top:412px;width:36px;height:26px;line-height:26px;color:#0000f0;text-align:center;">M020</div>
<div class="cell" style="left:461px;top:412px;width:90px;height:26px;line-height:26px;color:#2b4a7d;text-align:left;padding-left:3px;">CD21080715_...</div>
<div class="cell" style="left:552px;top:412px;width:108px;height:26px;line-height:26px;color:#555;text-align:center;">不喷锡出货</div>
<div class="cell" style="left:661px;top:412px;width:54px;height:26px;line-height:26px;color:#555;text-align:center;">y3131</div>
<div class="cell" style="left:771px;top:412px;width:45px;height:26px;line-height:26px;color:#555;text-align:center;">工程部</div>
<div class="cell" style="left:817px;top:412px;width:45px;height:26px;line-height:26px;color:#555;text-align:center;">2</div>
<div class="cell" style="left:863px;top:412px;width:36px;height:26px;line-height:26px;color:#555;text-align:center;">11/26</div>
<div class="cell" style="left:900px;top:412px;width:36px;height:26px;line-height:26px;color:#555;text-align:center;">11/27</div>
<div class="cell" style="left:937px;top:412px;width:54px;height:26px;line-height:26px;color:#ff0000;text-align:left;padding-left:4px;">24小时...</div>
<div class="cell" style="left:992px;top:412px;width:54px;height:26px;line-height:26px;color:#ff9b00;text-align:center;">逾期20天</div>
<div class="cell" style="left:1047px;top:412px;width:41px;height:26px;line-height:26px;color:#555;text-align:center;">8</div>
<div class="cell" style="left:1182px;top:412px;width:50px;height:26px;line-height:26px;color:#555;text-align:center;">￥200</div>
<div class="cell" style="left:1233px;top:412px;width:41px;height:26px;line-height:26px;color:#555;text-align:center;">0.024</div>
<div class="cell" style="left:1275px;top:412px;width:54px;height:26px;line-height:26px;color:#555;text-align:center;">铝基板</div>
<div class="cell" style="left:1330px;top:412px;width:70px;height:26px;line-height:26px;color:#555;text-align:left;padding-left:5px;">2.0W</div>
<div class="a" style="left:187px;top:443px;width:16px;height:17px;border:1px solid #d2d2d2;border-radius:2px;background:#fff"></div>
<div class="cell" style="left:208px;top:439px;width:41px;height:26px;line-height:26px;color:#555;text-align:center;">2399</div>
<div class="a" style="left:257px;top:443px;width:31px;height:18px;background:#ff5722;border-radius:2px;color:#fff;font-size:10.8px;text-align:center;line-height:18px">样板</div>
<div class="cell" style="left:424px;top:439px;width:36px;height:26px;line-height:26px;color:#0000f0;text-align:center;">M020</div>
<div class="cell" style="left:461px;top:439px;width:90px;height:26px;line-height:26px;color:#2b4a7d;text-align:left;padding-left:3px;">CD21080715_...</div>
<div class="cell" style="left:661px;top:439px;width:54px;height:26px;line-height:26px;color:#555;text-align:center;">y3132</div>
<div class="cell" style="left:771px;top:439px;width:45px;height:26px;line-height:26px;color:#555;text-align:center;">工程部</div>
<div class="cell" style="left:817px;top:439px;width:45px;height:26px;line-height:26px;color:#555;text-align:center;">2</div>
<div class="cell" style="left:863px;top:439px;width:36px;height:26px;line-height:26px;color:#555;text-align:center;">11/26</div>
<div class="cell" style="left:900px;top:439px;width:36px;height:26px;line-height:26px;color:#555;text-align:center;">11/27</div>
<div class="cell" style="left:937px;top:439px;width:54px;height:26px;line-height:26px;color:#ff0000;text-align:left;padding-left:4px;">24小时...</div>
<div class="cell" style="left:992px;top:439px;width:54px;height:26px;line-height:26px;color:#ff9b00;text-align:center;">逾期20天</div>
<div class="cell" style="left:1047px;top:439px;width:41px;height:26px;line-height:26px;color:#555;text-align:center;">8</div>
<div class="cell" style="left:1182px;top:439px;width:50px;height:26px;line-height:26px;color:#555;text-align:center;">￥200</div>
<div class="cell" style="left:1233px;top:439px;width:41px;height:26px;line-height:26px;color:#555;text-align:center;">0.111</div>
<div class="cell" style="left:1275px;top:439px;width:54px;height:26px;line-height:26px;color:#555;text-align:center;">铝基板</div>
<div class="cell" style="left:1330px;top:439px;width:70px;height:26px;line-height:26px;color:#555;text-align:left;padding-left:5px;">2.0W</div>
<div class="a" style="left:187px;top:470px;width:16px;height:17px;border:1px solid #d2d2d2;border-radius:2px;background:#fff"></div>
<div class="cell" style="left:208px;top:466px;width:41px;height:26px;line-height:26px;color:#555;text-align:center;">2398</div>
<div class="a" style="left:257px;top:470px;width:31px;height:18px;background:#ff5722;border-radius:2px;color:#fff;font-size:10.8px;text-align:center;line-height:18px">样板</div>
<div class="cell" style="left:424px;top:466px;width:36px;height:26px;line-height:26px;color:#0000f0;text-align:center;">M163</div>
<div class="cell" style="left:461px;top:466px;width:90px;height:26px;line-height:26px;color:#2b4a7d;text-align:left;padding-left:3px;">KF020-HZYDD...</div>
<div class="cell" style="left:552px;top:466px;width:108px;height:26px;line-height:26px;color:#555;text-align:center;">双面字符</div>
<div class="cell" style="left:661px;top:466px;width:54px;height:26px;line-height:26px;color:#555;text-align:center;">y3130</div>
<div class="cell" style="left:771px;top:466px;width:45px;height:26px;line-height:26px;color:#555;text-align:center;">工程部</div>
<div class="cell" style="left:817px;top:466px;width:45px;height:26px;line-height:26px;color:#555;text-align:center;">6</div>
<div class="cell" style="left:863px;top:466px;width:36px;height:26px;line-height:26px;color:#555;text-align:center;">11/26</div>
<div class="cell" style="left:900px;top:466px;width:36px;height:26px;line-height:26px;color:#555;text-align:center;">11/27</div>
<div class="cell" style="left:937px;top:466px;width:54px;height:26px;line-height:26px;color:#ff0000;text-align:left;padding-left:4px;">24小时...</div>
<div class="cell" style="left:992px;top:466px;width:54px;height:26px;line-height:26px;color:#ff9b00;text-align:center;">逾期20天</div>
<div class="cell" style="left:1047px;top:466px;width:41px;height:26px;line-height:26px;color:#555;text-align:center;">10</div>
<div class="cell" style="left:1182px;top:466px;width:50px;height:26px;line-height:26px;color:#555;text-align:center;">￥429</div>
<div class="cell" style="left:1233px;top:466px;width:41px;height:26px;line-height:26px;color:#555;text-align:center;">0.299</div>
<div class="cell" style="left:1275px;top:466px;width:54px;height:26px;line-height:26px;color:#555;text-align:center;">FR-4</div>
<div class="a" style="left:187px;top:497px;width:16px;height:17px;border:1px solid #d2d2d2;border-radius:2px;background:#fff"></div>
<div class="cell" style="left:208px;top:493px;width:41px;height:26px;line-height:26px;color:#555;text-align:center;">2397</div>
<div class="a" style="left:257px;top:497px;width:31px;height:18px;background:#393d49;border-radius:2px;color:#fff;font-size:10.8px;text-align:center;line-height:18px">批量</div>
<div class="cell" style="left:424px;top:493px;width:36px;height:26px;line-height:26px;color:#0000f0;text-align:center;">F039</div>
<div class="cell" style="left:461px;top:493px;width:90px;height:26px;line-height:26px;color:#2b4a7d;text-align:center;">FR8080-A1.zip</div>
<div class="cell" style="left:552px;top:493px;width:108px;height:26px;line-height:26px;color:#555;text-align:center;">改周期 加急</div>
<div class="cell" style="left:661px;top:493px;width:54px;height:26px;line-height:26px;color:#555;text-align:center;">p3021</div>
<div class="cell" style="left:771px;top:493px;width:45px;height:26px;line-height:26px;color:#555;text-align:center;">下单</div>
<div class="cell" style="left:863px;top:493px;width:36px;height:26px;line-height:26px;color:#555;text-align:center;">11/26</div>
<div class="cell" style="left:900px;top:493px;width:36px;height:26px;line-height:26px;color:#555;text-align:center;">11/30</div>
<div class="cell" style="left:992px;top:493px;width:54px;height:26px;line-height:26px;color:#ff9b00;text-align:center;">逾期17天</div>
<div class="cell" style="left:1047px;top:493px;width:41px;height:26px;line-height:26px;color:#555;text-align:center;">2300</div>
<div class="cell" style="left:1182px;top:493px;width:50px;height:26px;line-height:26px;color:#555;text-align:center;">￥4232</div>
<div class="cell" style="left:1233px;top:493px;width:41px;height:26px;line-height:26px;color:#555;text-align:center;">19.237</div>
<div class="cell" style="left:1275px;top:493px;width:54px;height:26px;line-height:26px;color:#555;text-align:center;">FR-4</div>
<div class="a" style="left:187px;top:524px;width:16px;height:17px;border:1px solid #d2d2d2;border-radius:2px;background:#fff"></div>
<div class="cell" style="left:208px;top:520px;width:41px;height:26px;line-height:26px;color:#555;text-align:center;">2396</div>
<div class="a" style="left:257px;top:524px;width:31px;height:18px;background:#ff5722;border-radius:2px;color:#fff;font-size:10.8px;text-align:center;line-height:18px">样板</div>
<div class="cell" style="left:424px;top:520px;width:36px;height:26px;line-height:26px;color:#0000f0;text-align:center;">M088</div>
<div class="cell" style="left:461px;top:520px;width:90px;height:26px;line-height:26px;color:#2b4a7d;text-align:left;padding-left:3px;">2-300W投光反...</div>
<div class="cell" style="left:661px;top:520px;width:54px;height:26px;line-height:26px;color:#555;text-align:center;">y3124</div>
<div class="cell" style="left:771px;top:520px;width:45px;height:26px;line-height:26px;color:#555;text-align:center;">工程部</div>
<div class="cell" style="left:817px;top:520px;width:45px;height:26px;line-height:26px;color:#555;text-align:center;">1</div>
<div class="cell" style="left:863px;top:520px;width:36px;height:26px;line-height:26px;color:#555;text-align:center;">11/25</div>
<div class="cell" style="left:900px;top:520px;width:36px;height:26px;line-height:26px;color:#555;text-align:center;">11/29</div>
<div class="cell" style="left:992px;top:520px;width:54px;height:26px;line-height:26px;color:#ff9b00;text-align:center;">逾期18天</div>
<div class="cell" style="left:1047px;top:520px;width:41px;height:26px;line-height:26px;color:#555;text-align:center;">5</div>
<div class="cell" style="left:1182px;top:520px;width:50px;height:26px;line-height:26px;color:#555;text-align:center;">￥200</div>
<div class="cell" style="left:1233px;top:520px;width:41px;height:26px;line-height:26px;color:#555;text-align:center;">0.459</div>
<div class="cell" style="left:1275px;top:520px;width:54px;height:26px;line-height:26px;color:#555;text-align:center;">铝基板</div>
<div class="cell" style="left:1330px;top:520px;width:70px;height:26px;line-height:26px;color:#555;text-align:left;padding-left:5px;">1.0W</div>
<div class="a" style="left:187px;top:551px;width:16px;height:17px;border:1px solid #d2d2d2;border-radius:2px;background:#fff"></div>
<div class="cell" style="left:208px;top:547px;width:41px;height:26px;line-height:26px;color:#555;text-align:center;">2395</div>
<div class="a" style="left:257px;top:551px;width:31px;height:18px;background:#ff5722;border-radius:2px;color:#fff;font-size:10.8px;text-align:center;line-height:18px">样板</div>
<div class="cell" style="left:424px;top:547px;width:36px;height:26px;line-height:26px;color:#0000f0;text-align:center;">M163</div>
<div class="cell" style="left:461px;top:547px;width:90px;height:26px;line-height:26px;color:#2b4a7d;text-align:left;padding-left:3px;">KF020-HZYPA...</div>
<div class="cell" style="left:552px;top:547px;width:108px;height:26px;line-height:26px;color:#555;text-align:left;padding-left:3px;">按客户图纸拼版左...</div>
<div class="cell" style="left:661px;top:547px;width:54px;height:26px;line-height:26px;color:#555;text-align:center;">y3129</div>
<div class="cell" style="left:716px;top:547px;width:54px;height:26px;line-height:26px;color:#555;text-align:center;">hp0392</div>
<div class="cell" style="left:771px;top:547px;width:45px;height:26px;line-height:26px;color:#555;text-align:center;">工程部</div>
<div class="cell" style="left:817px;top:547px;width:45px;height:26px;line-height:26px;color:#555;text-align:center;">6</div>
<div class="cell" style="left:863px;top:547px;width:36px;height:26px;line-height:26px;color:#555;text-align:center;">11/25</div>
<div class="cell" style="left:900px;top:547px;width:36px;height:26px;line-height:26px;color:#555;text-align:center;">11/29</div>
<div class="cell" style="left:992px;top:547px;width:54px;height:26px;line-height:26px;color:#ff9b00;text-align:center;">逾期18天</div>
<div class="cell" style="left:1047px;top:547px;width:41px;height:26px;line-height:26px;color:#555;text-align:center;">20</div>
<div class="cell" style="left:1182px;top:547px;width:50px;height:26px;line-height:26px;color:#555;text-align:center;">￥185</div>
<div class="cell" style="left:1233px;top:547px;width:41px;height:26px;line-height:26px;color:#555;text-align:center;">0.298</div>
<div class="cell" style="left:1275px;top:547px;width:54px;height:26px;line-height:26px;color:#555;text-align:center;">铝基板</div>
<div class="cell" style="left:1330px;top:547px;width:70px;height:26px;line-height:26px;color:#555;text-align:left;padding-left:5px;">1.0W</div>
<div class="a" style="left:187px;top:578px;width:16px;height:17px;border:1px solid #d2d2d2;border-radius:2px;background:#fff"></div>
<div class="cell" style="left:208px;top:574px;width:41px;height:26px;line-height:26px;color:#555;text-align:center;">2394</div>
<div class="a" style="left:257px;top:578px;width:31px;height:18px;background:#393d49;border-radius:2px;color:#fff;font-size:10.8px;text-align:center;line-height:18px">批量</div>
<div class="cell" style="left:424px;top:574px;width:36px;height:26px;line-height:26px;color:#0000f0;text-align:center;">F150</div>
<div class="cell" style="left:461px;top:574px;width:90px;height:26px;line-height:26px;color:#2b4a7d;text-align:left;padding-left:3px;">802-238-HX85-...</div>
<div class="cell" style="left:552px;top:574px;width:108px;height:26px;line-height:26px;color:#555;text-align:center;">激光V穿板</div>
<div class="cell" style="left:661px;top:574px;width:54px;height:26px;line-height:26px;color:#555;text-align:center;">p2691</div>
<div class="cell" style="left:771px;top:574px;width:45px;height:26px;line-height:26px;color:#555;text-align:center;">生产中</div>
<div class="cell" style="left:817px;top:574px;width:45px;height:26px;line-height:26px;color:#555;text-align:center;">1</div>
<div class="cell" style="left:863px;top:574px;width:36px;height:26px;line-height:26px;color:#555;text-align:center;">11/25</div>
<div class="cell" style="left:900px;top:574px;width:36px;height:26px;line-height:26px;color:#555;text-align:center;">12/02</div>
<div class="cell" style="left:992px;top:574px;width:54px;height:26px;line-height:26px;color:#ff9b00;text-align:center;">逾期15天</div>
<div class="cell" style="left:1047px;top:574px;width:41px;height:26px;line-height:26px;color:#555;text-align:center;">5000</div>
<div class="cell" style="left:1182px;top:574px;width:50px;height:26px;line-height:26px;color:#555;text-align:center;">￥4100</div>
<div class="cell" style="left:1233px;top:574px;width:41px;height:26px;line-height:26px;color:#555;text-align:center;">13.529</div>
<div class="cell" style="left:1275px;top:574px;width:54px;height:26px;line-height:26px;color:#555;text-align:center;">铝基板</div>
<div class="cell" style="left:1330px;top:574px;width:70px;height:26px;line-height:26px;color:#555;text-align:left;padding-left:5px;">1.0W</div>
<div class="a" style="left:187px;top:605px;width:16px;height:17px;border:1px solid #d2d2d2;border-radius:2px;background:#fff"></div>
<div class="cell" style="left:208px;top:601px;width:41px;height:26px;line-height:26px;color:#555;text-align:center;">2393</div>
<div class="a" style="left:257px;top:605px;width:31px;height:18px;background:#ff5722;border-radius:2px;color:#fff;font-size:10.8px;text-align:center;line-height:18px">样板</div>
<div class="cell" style="left:424px;top:601px;width:36px;height:26px;line-height:26px;color:#0000f0;text-align:center;">F175</div>
<div class="cell" style="left:461px;top:601px;width:90px;height:26px;line-height:26px;color:#2b4a7d;text-align:left;padding-left:3px;">DOJ.E215.101...</div>
<div class="cell" style="left:552px;top:601px;width:108px;height:26px;line-height:26px;color:#555;text-align:center;">V穿 加UL 周期</div>
<div class="cell" style="left:661px;top:601px;width:54px;height:26px;line-height:26px;color:#555;text-align:center;">y3123</div>
<div class="cell" style="left:771px;top:601px;width:45px;height:26px;line-height:26px;color:#555;text-align:center;">生产中</div>
<div class="cell" style="left:817px;top:601px;width:45px;height:26px;line-height:26px;color:#555;text-align:center;">1</div>
<div class="cell" style="left:863px;top:601px;width:36px;height:26px;line-height:26px;color:#555;text-align:center;">11/25</div>
<div class="cell" style="left:900px;top:601px;width:36px;height:26px;line-height:26px;color:#555;text-align:center;">11/27</div>
<div class="cell" style="left:937px;top:601px;width:54px;height:26px;line-height:26px;color:#ff0000;text-align:left;padding-left:4px;">48小时...</div>
<div class="cell" style="left:992px;top:601px;width:54px;height:26px;line-height:26px;color:#ff9b00;text-align:center;">逾期20天</div>
<div class="cell" style="left:1047px;top:601px;width:41px;height:26px;line-height:26px;color:#555;text-align:center;">30</div>
<div class="cell" style="left:1182px;top:601px;width:50px;height:26px;line-height:26px;color:#555;text-align:center;">￥150</div>
<div class="cell" style="left:1233px;top:601px;width:41px;height:26px;line-height:26px;color:#555;text-align:center;">0.079</div>
<div class="cell" style="left:1275px;top:601px;width:54px;height:26px;line-height:26px;color:#555;text-align:center;">铝基板</div>
<div class="cell" style="left:1330px;top:601px;width:70px;height:26px;line-height:26px;color:#555;text-align:left;padding-left:5px;">1.0W</div>
<div class="a" style="left:187px;top:632px;width:16px;height:17px;border:1px solid #d2d2d2;border-radius:2px;background:#fff"></div>
<div class="cell" style="left:208px;top:628px;width:41px;height:26px;line-height:26px;color:#555;text-align:center;">2392</div>
<div class="a" style="left:257px;top:632px;width:31px;height:18px;background:#ff5722;border-radius:2px;color:#fff;font-size:10.8px;text-align:center;line-height:18px">样板</div>
<div class="cell" style="left:424px;top:628px;width:36px;height:26px;line-height:26px;color:#0000f0;text-align:center;">M163</div>
<div class="cell" style="left:461px;top:628px;width:90px;height:26px;line-height:26px;color:#2b4a7d;text-align:left;padding-left:3px;">KF020-HDD20...</div>
<div class="cell" style="left:661px;top:628px;width:54px;height:26px;line-height:26px;color:#555;text-align:center;">y3128</div>
<div class="cell" style="left:716px;top:628px;width:54px;height:26px;line-height:26px;color:#555;text-align:center;">hp0392</div>
<div class="cell" style="left:771px;top:628px;width:45px;height:26px;line-height:26px;color:#555;text-align:center;">生产中</div>
<div class="cell" style="left:817px;top:628px;width:45px;height:26px;line-height:26px;color:#555;text-align:center;">6</div>
<div class="cell" style="left:863px;top:628px;width:36px;height:26px;line-height:26px;color:#555;text-align:center;">11/25</div>
<div class="cell" style="left:900px;top:628px;width:36px;height:26px;line-height:26px;color:#555;text-align:center;">11/29</div>
<div class="cell" style="left:992px;top:628px;width:54px;height:26px;line-height:26px;color:#ff9b00;text-align:center;">逾期18天</div>
<div class="cell" style="left:1047px;top:628px;width:41px;height:26px;line-height:26px;color:#555;text-align:center;">10</div>
<div class="cell" style="left:1182px;top:628px;width:50px;height:26px;line-height:26px;color:#555;text-align:center;">￥153</div>
<div class="cell" style="left:1233px;top:628px;width:41px;height:26px;line-height:26px;color:#555;text-align:center;">0.113</div>
<div class="cell" style="left:1275px;top:628px;width:54px;height:26px;line-height:26px;color:#555;text-align:center;">铝基板</div>
<div class="cell" style="left:1330px;top:628px;width:70px;height:26px;line-height:26px;color:#555;text-align:left;padding-left:5px;">1.0W</div>
<div class="a" style="left:187px;top:659px;width:16px;height:17px;border:1px solid #d2d2d2;border-radius:2px;background:#fff"></div>
<div class="cell" style="left:208px;top:655px;width:41px;height:26px;line-height:26px;color:#555;text-align:center;">2391</div>
<div class="a" style="left:257px;top:659px;width:31px;height:18px;background:#ff5722;border-radius:2px;color:#fff;font-size:10.8px;text-align:center;line-height:18px">样板</div>
<div class="cell" style="left:424px;top:655px;width:36px;height:26px;line-height:26px;color:#0000f0;text-align:center;">M163</div>
<div class="cell" style="left:461px;top:655px;width:90px;height:26px;line-height:26px;color:#2b4a7d;text-align:left;padding-left:3px;">KF020-HPM01...</div>
<div class="cell" style="left:661px;top:655px;width:54px;height:26px;line-height:26px;color:#555;text-align:center;">y3127</div>
<div class="cell" style="left:716px;top:655px;width:54px;height:26px;line-height:26px;color:#555;text-align:center;">hp0391</div>
<div class="cell" style="left:771px;top:655px;width:45px;height:26px;line-height:26px;color:#555;text-align:center;">生产中</div>
<div class="cell" style="left:817px;top:655px;width:45px;height:26px;line-height:26px;color:#555;text-align:center;">6</div>
<div class="cell" style="left:863px;top:655px;width:36px;height:26px;line-height:26px;color:#555;text-align:center;">11/25</div>
<div class="cell" style="left:900px;top:655px;width:36px;height:26px;line-height:26px;color:#555;text-align:center;">11/29</div>
<div class="cell" style="left:992px;top:655px;width:54px;height:26px;line-height:26px;color:#ff9b00;text-align:center;">逾期18天</div>
<div class="cell" style="left:1047px;top:655px;width:41px;height:26px;line-height:26px;color:#555;text-align:center;">10</div>
<div class="cell" style="left:1182px;top:655px;width:50px;height:26px;line-height:26px;color:#555;text-align:center;">￥262</div>
<div class="cell" style="left:1233px;top:655px;width:41px;height:26px;line-height:26px;color:#555;text-align:center;">0.328</div>
<div class="cell" style="left:1275px;top:655px;width:54px;height:26px;line-height:26px;color:#555;text-align:center;">FR-4</div>
<div class="a" style="left:1357px;top:275px;width:4px;height:406px;background:linear-gradient(to right,rgba(0,0,0,0),rgba(0,0,0,0.08))"></div>
<div class="a" style="left:1361px;top:275px;width:173px;height:28px;background:#f2f2f2"></div>
<div class="a" style="left:1361px;top:303px;width:173px;height:378px;background:#fff"></div>
<div class="a" style="left:1361px;top:275px;width:173px;height:1px;background:#a8a8a8"></div>
<div class="a" style="left:1361px;top:303px;width:173px;height:1px;background:#a8a8a8"></div>
<div class="a" style="left:1361px;top:330px;width:173px;height:1px;background:#a8a8a8"></div>
<div class="a" style="left:1361px;top:357px;width:173px;height:1px;background:#a8a8a8"></div>
<div class="a" style="left:1361px;top:384px;width:173px;height:1px;background:#a8a8a8"></div>
<div class="a" style="left:1361px;top:411px;width:173px;height:1px;background:#a8a8a8"></div>
<div class="a" style="left:1361px;top:438px;width:173px;height:1px;background:#a8a8a8"></div>
<div class="a" style="left:1361px;top:465px;width:173px;height:1px;background:#a8a8a8"></div>
<div class="a" style="left:1361px;top:492px;width:173px;height:1px;background:#a8a8a8"></div>
<div class="a" style="left:1361px;top:519px;width:173px;height:1px;background:#a8a8a8"></div>
<div class="a" style="left:1361px;top:546px;width:173px;height:1px;background:#a8a8a8"></div>
<div class="a" style="left:1361px;top:573px;width:173px;height:1px;background:#a8a8a8"></div>
<div class="a" style="left:1361px;top:600px;width:173px;height:1px;background:#a8a8a8"></div>
<div class="a" style="left:1361px;top:627px;width:173px;height:1px;background:#a8a8a8"></div>
<div class="a" style="left:1361px;top:654px;width:173px;height:1px;background:#a8a8a8"></div>
<div class="a" style="left:1361px;top:681px;width:173px;height:1px;background:#a8a8a8"></div>
<div class="a" style="left:1361px;top:302px;width:173px;height:1px;background:#a8a8a8"></div>
<div class="a" style="left:1361px;top:275px;width:2px;height:406px;background:#a8a8a8"></div>
<div class="cell" style="left:1363px;top:276px;width:171px;height:27px;line-height:27px;font-weight:bold;color:#555">操作</div>
<div class="a" style="left:1366px;top:308px;width:45px;height:18px;background:#009688;border-radius:2px;color:#fff;font-size:10.8px;line-height:18px"><svg class="a" style="left:4px;top:2px" width="14" height="14"><circle cx="6" cy="6" r="4.6" fill="none" stroke="#e8f4f0" stroke-width="1.4"/><path d="M9.3 9.3 L12.5 12.5" stroke="#e8f4f0" stroke-width="2.2"/><path d="M4.5 4 V8" stroke="#cde" stroke-width="0.8"/></svg><span class="a" style="left:19px;top:0">查看</span></div>
<div class="a" style="left:1366px;top:335px;width:45px;height:18px;background:#009688;border-radius:2px;color:#fff;font-size:10.8px;line-height:18px"><svg class="a" style="left:4px;top:2px" width="14" height="14"><circle cx="6" cy="6" r="4.6" fill="none" stroke="#e8f4f0" stroke-width="1.4"/><path d="M9.3 9.3 L12.5 12.5" stroke="#e8f4f0" stroke-width="2.2"/><path d="M4.5 4 V8" stroke="#cde" stroke-width="0.8"/></svg><span class="a" style="left:19px;top:0">查看</span></div>
<div class="a" style="left:1366px;top:362px;width:45px;height:18px;background:#009688;border-radius:2px;color:#fff;font-size:10.8px;line-height:18px"><svg class="a" style="left:4px;top:2px" width="14" height="14"><circle cx="6" cy="6" r="4.6" fill="none" stroke="#e8f4f0" stroke-width="1.4"/><path d="M9.3 9.3 L12.5 12.5" stroke="#e8f4f0" stroke-width="2.2"/><path d="M4.5 4 V8" stroke="#cde" stroke-width="0.8"/></svg><span class="a" style="left:19px;top:0">查看</span></div>
<div class="a" style="left:1366px;top:389px;width:45px;height:18px;background:#009688;border-radius:2px;color:#fff;font-size:10.8px;line-height:18px"><svg class="a" style="left:4px;top:2px" width="14" height="14"><circle cx="6" cy="6" r="4.6" fill="none" stroke="#e8f4f0" stroke-width="1.4"/><path d="M9.3 9.3 L12.5 12.5" stroke="#e8f4f0" stroke-width="2.2"/><path d="M4.5 4 V8" stroke="#cde" stroke-width="0.8"/></svg><span class="a" style="left:19px;top:0">查看</span></div>
<div class="a" style="left:1366px;top:416px;width:45px;height:18px;background:#009688;border-radius:2px;color:#fff;font-size:10.8px;line-height:18px"><svg class="a" style="left:4px;top:2px" width="14" height="14"><circle cx="6" cy="6" r="4.6" fill="none" stroke="#e8f4f0" stroke-width="1.4"/><path d="M9.3 9.3 L12.5 12.5" stroke="#e8f4f0" stroke-width="2.2"/><path d="M4.5 4 V8" stroke="#cde" stroke-width="0.8"/></svg><span class="a" style="left:19px;top:0">查看</span></div>
<div class="a" style="left:1366px;top:443px;width:45px;height:18px;background:#009688;border-radius:2px;color:#fff;font-size:10.8px;line-height:18px"><svg class="a" style="left:4px;top:2px" width="14" height="14"><circle cx="6" cy="6" r="4.6" fill="none" stroke="#e8f4f0" stroke-width="1.4"/><path d="M9.3 9.3 L12.5 12.5" stroke="#e8f4f0" stroke-width="2.2"/><path d="M4.5 4 V8" stroke="#cde" stroke-width="0.8"/></svg><span class="a" style="left:19px;top:0">查看</span></div>
<div class="a" style="left:1366px;top:470px;width:45px;height:18px;background:#009688;border-radius:2px;color:#fff;font-size:10.8px;line-height:18px"><svg class="a" style="left:4px;top:2px" width="14" height="14"><circle cx="6" cy="6" r="4.6" fill="none" stroke="#e8f4f0" stroke-width="1.4"/><path d="M9.3 9.3 L12.5 12.5" stroke="#e8f4f0" stroke-width="2.2"/><path d="M4.5 4 V8" stroke="#cde" stroke-width="0.8"/></svg><span class="a" style="left:19px;top:0">查看</span></div>
<div class="a" style="left:1366px;top:497px;width:45px;height:18px;background:#009688;border-radius:2px;color:#fff;font-size:10.8px;line-height:18px"><svg class="a" style="left:4px;top:2px" width="14" height="14"><circle cx="6" cy="6" r="4.6" fill="none" stroke="#e8f4f0" stroke-width="1.4"/><path d="M9.3 9.3 L12.5 12.5" stroke="#e8f4f0" stroke-width="2.2"/><path d="M4.5 4 V8" stroke="#cde" stroke-width="0.8"/></svg><span class="a" style="left:19px;top:0">查看</span></div>
<div class="a" style="left:1419px;top:497px;width:31px;height:18px;background:#1e9fff;border-radius:2px;color:#fff;font-size:10.8px;text-align:center;line-height:18px">生产</div>
<div class="a" style="left:1366px;top:524px;width:45px;height:18px;background:#009688;border-radius:2px;color:#fff;font-size:10.8px;line-height:18px"><svg class="a" style="left:4px;top:2px" width="14" height="14"><circle cx="6" cy="6" r="4.6" fill="none" stroke="#e8f4f0" stroke-width="1.4"/><path d="M9.3 9.3 L12.5 12.5" stroke="#e8f4f0" stroke-width="2.2"/><path d="M4.5 4 V8" stroke="#cde" stroke-width="0.8"/></svg><span class="a" style="left:19px;top:0">查看</span></div>
<div class="a" style="left:1366px;top:551px;width:45px;height:18px;background:#009688;border-radius:2px;color:#fff;font-size:10.8px;line-height:18px"><svg class="a" style="left:4px;top:2px" width="14" height="14"><circle cx="6" cy="6" r="4.6" fill="none" stroke="#e8f4f0" stroke-width="1.4"/><path d="M9.3 9.3 L12.5 12.5" stroke="#e8f4f0" stroke-width="2.2"/><path d="M4.5 4 V8" stroke="#cde" stroke-width="0.8"/></svg><span class="a" style="left:19px;top:0">查看</span></div>
<div class="a" style="left:1366px;top:578px;width:45px;height:18px;background:#009688;border-radius:2px;color:#fff;font-size:10.8px;line-height:18px"><svg class="a" style="left:4px;top:2px" width="14" height="14"><circle cx="6" cy="6" r="4.6" fill="none" stroke="#e8f4f0" stroke-width="1.4"/><path d="M9.3 9.3 L12.5 12.5" stroke="#e8f4f0" stroke-width="2.2"/><path d="M4.5 4 V8" stroke="#cde" stroke-width="0.8"/></svg><span class="a" style="left:19px;top:0">查看</span></div>
<div class="a" style="left:1366px;top:605px;width:45px;height:18px;background:#009688;border-radius:2px;color:#fff;font-size:10.8px;line-height:18px"><svg class="a" style="left:4px;top:2px" width="14" height="14"><circle cx="6" cy="6" r="4.6" fill="none" stroke="#e8f4f0" stroke-width="1.4"/><path d="M9.3 9.3 L12.5 12.5" stroke="#e8f4f0" stroke-width="2.2"/><path d="M4.5 4 V8" stroke="#cde" stroke-width="0.8"/></svg><span class="a" style="left:19px;top:0">查看</span></div>
<div class="a" style="left:1366px;top:632px;width:45px;height:18px;background:#009688;border-radius:2px;color:#fff;font-size:10.8px;line-height:18px"><svg class="a" style="left:4px;top:2px" width="14" height="14"><circle cx="6" cy="6" r="4.6" fill="none" stroke="#e8f4f0" stroke-width="1.4"/><path d="M9.3 9.3 L12.5 12.5" stroke="#e8f4f0" stroke-width="2.2"/><path d="M4.5 4 V8" stroke="#cde" stroke-width="0.8"/></svg><span class="a" style="left:19px;top:0">查看</span></div>
<div class="a" style="left:1366px;top:659px;width:45px;height:18px;background:#009688;border-radius:2px;color:#fff;font-size:10.8px;line-height:18px"><svg class="a" style="left:4px;top:2px" width="14" height="14"><circle cx="6" cy="6" r="4.6" fill="none" stroke="#e8f4f0" stroke-width="1.4"/><path d="M9.3 9.3 L12.5 12.5" stroke="#e8f4f0" stroke-width="2.2"/><path d="M4.5 4 V8" stroke="#cde" stroke-width="0.8"/></svg><span class="a" style="left:19px;top:0">查看</span></div>
<div class="a" style="left:181px;top:682px;width:1371px;height:4px;background:#eeeeee"></div>
<div class="a" style="left:181px;top:681px;width:1354px;height:1px;background:#fff"></div>
<div class="a" style="left:1535px;top:86px;width:17px;height:596px;background:#f1f1f1"></div>
<div class="a" style="left:1537px;top:103px;width:13px;height:435px;background:#c1c1c1"></div>
<svg class="a" style="left:1539px;top:93px" width="9" height="5"><path d="M0 5 L4.5 0 L9 5 Z" fill="#a3a3a3"/></svg>
<svg class="a" style="left:1539px;top:669px" width="9" height="5"><path d="M0 0 L9 0 L4.5 5 Z" fill="#505050"/></svg>
<div class="a" style="left:300px;top:305px;width:12px;height:12px;background:#fafafa"></div><div class="a" style="left:312px;top:305px;width:12px;height:12px;background:#e7e7e8"></div><div class="a" style="left:324px;top:305px;width:12px;height:12px;background:#e7e7e8"></div><div class="a" style="left:336px;top:305px;width:12px;height:12px;background:#fafafa"></div><div class="a" style="left:372px;top:305px;width:12px;height:12px;background:#e7e7e8"></div><div class="a" style="left:384px;top:305px;width:12px;height:12px;background:#e7e7e8"></div><div class="a" style="left:396px;top:305px;width:12px;height:12px;background:#e7e7e8"></div><div class="a" style="left:408px;top:305px;width:12px;height:12px;background:#fafafa"></div><div class="a" style="left:300px;top:317px;width:12px;height:12px;background:#f2f2f2"></div><div class="a" style="left:312px;top:317px;width:12px;height:12px;background:#e7e7e8"></div><div class="a" style="left:324px;top:317px;width:12px;height:12px;background:#e7e7e8"></div><div class="a" style="left:336px;top:317px;width:12px;height:12px;background:#f2f2f2"></div><div class="a" style="left:372px;top:317px;width:12px;height:12px;background:#e7e7e8"></div><div class="a" style="left:384px;top:317px;width:12px;height:12px;background:#f2f2f2"></div><div class="a" style="left:396px;top:317px;width:12px;height:12px;background:#e7e7e8"></div><div class="a" style="left:408px;top:317px;width:12px;height:12px;background:#fafafa"></div><div class="a" style="left:300px;top:329px;width:12px;height:12px;background:#f2f2f2"></div><div class="a" style="left:312px;top:329px;width:12px;height:12px;background:#f2f2f2"></div><div class="a" style="left:324px;top:329px;width:12px;height:12px;background:#f2f2f2"></div><div class="a" style="left:336px;top:329px;width:12px;height:12px;background:#f2f2f2"></div><div class="a" style="left:372px;top:329px;width:12px;height:12px;background:#f2f2f2"></div><div class="a" style="left:384px;top:329px;width:12px;height:12px;background:#f2f2f2"></div><div class="a" style="left:396px;top:329px;width:12px;height:12px;background:#f2f2f2"></div><div class="a" style="left:408px;top:329px;width:12px;height:12px;background:#f2f2f2"></div><div class="a" style="left:300px;top:341px;width:12px;height:12px;background:#fafafa"></div><div class="a" style="left:312px;top:341px;width:12px;height:12px;background:#d8d8da"></div><div class="a" style="left:324px;top:341px;width:12px;height:12px;background:#d8d8da"></div><div class="a" style="left:336px;top:341px;width:12px;height:12px;background:#fafafa"></div><div class="a" style="left:372px;top:341px;width:12px;height:12px;background:#cacacc"></div><div class="a" style="left:384px;top:341px;width:12px;height:12px;background:#d8d8da"></div><div class="a" style="left:396px;top:341px;width:12px;height:12px;background:#d8d8da"></div><div class="a" style="left:408px;top:341px;width:12px;height:12px;background:#fafafa"></div><div class="a" style="left:300px;top:353px;width:12px;height:12px;background:#f2f2f2"></div><div class="a" style="left:312px;top:353px;width:12px;height:12px;background:#f2f2f2"></div><div class="a" style="left:324px;top:353px;width:12px;height:12px;background:#f2f2f2"></div><div class="a" style="left:336px;top:353px;width:12px;height:12px;background:#f2f2f2"></div><div class="a" style="left:372px;top:353px;width:12px;height:12px;background:#f2f2f2"></div><div class="a" style="left:384px;top:353px;width:12px;height:12px;background:#f2f2f2"></div><div class="a" style="left:396px;top:353px;width:12px;height:12px;background:#f2f2f2"></div><div class="a" style="left:408px;top:353px;width:12px;height:12px;background:#f2f2f2"></div><div class="a" style="left:300px;top:365px;width:12px;height:12px;background:#e7e7e8"></div><div class="a" style="left:312px;top:365px;width:12px;height:12px;background:#cacacc"></div><div class="a" style="left:324px;top:365px;width:12px;height:12px;background:#d8d8da"></div><div class="a" style="left:336px;top:365px;width:12px;height:12px;background:#f2f2f2"></div><div class="a" style="left:372px;top:365px;width:12px;height:12px;background:#d8d8da"></div><div class="a" style="left:384px;top:365px;width:12px;height:12px;background:#cacacc"></div><div class="a" style="left:396px;top:365px;width:12px;height:12px;background:#e7e7e8"></div><div class="a" style="left:408px;top:365px;width:12px;height:12px;background:#fafafa"></div><div class="a" style="left:300px;top:377px;width:12px;height:12px;background:#f2f2f2"></div><div class="a" style="left:312px;top:377px;width:12px;height:12px;background:#f2f2f2"></div><div class="a" style="left:324px;top:377px;width:12px;height:12px;background:#f2f2f2"></div><div class="a" style="left:336px;top:377px;width:12px;height:12px;background:#f2f2f2"></div><div class="a" style="left:372px;top:377px;width:12px;height:12px;background:#f2f2f2"></div><div class="a" style="left:384px;top:377px;width:12px;height:12px;background:#f2f2f2"></div><div class="a" style="left:396px;top:377px;width:12px;height:12px;background:#f2f2f2"></div><div class="a" style="left:408px;top:377px;width:12px;height:12px;background:#f2f2f2"></div><div class="a" style="left:300px;top:389px;width:12px;height:12px;background:#f2f2f2"></div><div class="a" style="left:312px;top:389px;width:12px;height:12px;background:#cacacc"></div><div class="a" style="left:324px;top:389px;width:12px;height:12px;background:#cacacc"></div><div class="a" style="left:336px;top:389px;width:12px;height:12px;background:#fafafa"></div><div class="a" style="left:372px;top:389px;width:12px;height:12px;background:#d8d8da"></div><div class="a" style="left:384px;top:389px;width:12px;height:12px;background:#cacacc"></div><div class="a" style="left:396px;top:389px;width:12px;height:12px;background:#d8d8da"></div><div class="a" style="left:408px;top:389px;width:12px;height:12px;background:#fafafa"></div><div class="a" style="left:300px;top:401px;width:12px;height:12px;background:#f2f2f2"></div><div class="a" style="left:312px;top:401px;width:12px;height:12px;background:#f2f2f2"></div><div class="a" style="left:324px;top:401px;width:12px;height:12px;background:#f2f2f2"></div><div class="a" style="left:336px;top:401px;width:12px;height:12px;background:#f2f2f2"></div><div class="a" style="left:372px;top:401px;width:12px;height:12px;background:#f2f2f2"></div><div class="a" style="left:384px;top:401px;width:12px;height:12px;background:#f2f2f2"></div><div class="a" style="left:396px;top:401px;width:12px;height:12px;background:#f2f2f2"></div><div class="a" style="left:408px;top:401px;width:12px;height:12px;background:#f2f2f2"></div><div class="a" style="left:300px;top:413px;width:12px;height:12px;background:#f2f2f2"></div><div class="a" style="left:312px;top:413px;width:12px;height:12px;background:#e7e7e8"></div><div class="a" style="left:324px;top:413px;width:12px;height:12px;background:#d8d8da"></div><div class="a" style="left:336px;top:413px;width:12px;height:12px;background:#fafafa"></div><div class="a" style="left:372px;top:413px;width:12px;height:12px;background:#d8d8da"></div><div class="a" style="left:384px;top:413px;width:12px;height:12px;background:#d8d8da"></div><div class="a" style="left:396px;top:413px;width:12px;height:12px;background:#e7e7e8"></div><div class="a" style="left:408px;top:413px;width:12px;height:12px;background:#fafafa"></div><div class="a" style="left:300px;top:425px;width:12px;height:12px;background:#f2f2f2"></div><div class="a" style="left:312px;top:425px;width:12px;height:12px;background:#e7e7e8"></div><div class="a" style="left:324px;top:425px;width:12px;height:12px;background:#e7e7e8"></div><div class="a" style="left:336px;top:425px;width:12px;height:12px;background:#fafafa"></div><div class="a" style="left:372px;top:425px;width:12px;height:12px;background:#d8d8da"></div><div class="a" style="left:384px;top:425px;width:12px;height:12px;background:#e7e7e8"></div><div class="a" style="left:396px;top:425px;width:12px;height:12px;background:#fafafa"></div><div class="a" style="left:408px;top:425px;width:12px;height:12px;background:#fafafa"></div><div class="a" style="left:300px;top:437px;width:12px;height:12px;background:#f2f2f2"></div><div class="a" style="left:312px;top:437px;width:12px;height:12px;background:#f2f2f2"></div><div class="a" style="left:324px;top:437px;width:12px;height:12px;background:#f2f2f2"></div><div class="a" style="left:336px;top:437px;width:12px;height:12px;background:#f2f2f2"></div><div class="a" style="left:372px;top:437px;width:12px;height:12px;background:#f2f2f2"></div><div class="a" style="left:384px;top:437px;width:12px;height:12px;background:#f2f2f2"></div><div class="a" style="left:396px;top:437px;width:12px;height:12px;background:#f2f2f2"></div><div class="a" style="left:408px;top:437px;width:12px;height:12px;background:#f2f2f2"></div><div class="a" style="left:300px;top:449px;width:12px;height:12px;background:#f2f2f2"></div><div class="a" style="left:312px;top:449px;width:12px;height:12px;background:#d8d8da"></div><div class="a" style="left:324px;top:449px;width:12px;height:12px;background:#cacacc"></div><div class="a" style="left:336px;top:449px;width:12px;height:12px;background:#fafafa"></div><div class="a" style="left:372px;top:449px;width:12px;height:12px;background:#cacacc"></div><div class="a" style="left:384px;top:449px;width:12px;height:12px;background:#d8d8da"></div><div class="a" style="left:396px;top:449px;width:12px;height:12px;background:#e7e7e8"></div><div class="a" style="left:408px;top:449px;width:12px;height:12px;background:#fafafa"></div><div class="a" style="left:300px;top:461px;width:12px;height:12px;background:#f2f2f2"></div><div class="a" style="left:312px;top:461px;width:12px;height:12px;background:#f2f2f2"></div><div class="a" style="left:324px;top:461px;width:12px;height:12px;background:#f2f2f2"></div><div class="a" style="left:336px;top:461px;width:12px;height:12px;background:#f2f2f2"></div><div class="a" style="left:348px;top:461px;width:12px;height:12px;background:#f2f2f2"></div><div class="a" style="left:360px;top:461px;width:12px;height:12px;background:#f2f2f2"></div><div class="a" style="left:372px;top:461px;width:12px;height:12px;background:#f2f2f2"></div><div class="a" style="left:384px;top:461px;width:12px;height:12px;background:#f2f2f2"></div><div class="a" style="left:396px;top:461px;width:12px;height:12px;background:#f2f2f2"></div><div class="a" style="left:408px;top:461px;width:12px;height:12px;background:#f2f2f2"></div><div class="a" style="left:300px;top:473px;width:12px;height:12px;background:#e7e7e8"></div><div class="a" style="left:312px;top:473px;width:12px;height:12px;background:#cacacc"></div><div class="a" style="left:324px;top:473px;width:12px;height:12px;background:#cacacc"></div><div class="a" style="left:336px;top:473px;width:12px;height:12px;background:#f2f2f2"></div><div class="a" style="left:348px;top:473px;width:12px;height:12px;background:#d8d8da"></div><div class="a" style="left:360px;top:473px;width:12px;height:12px;background:#cacacc"></div><div class="a" style="left:372px;top:473px;width:12px;height:12px;background:#e7e7e8"></div><div class="a" style="left:384px;top:473px;width:12px;height:12px;background:#d8d8da"></div><div class="a" style="left:396px;top:473px;width:12px;height:12px;background:#d8d8da"></div><div class="a" style="left:408px;top:473px;width:12px;height:12px;background:#f2f2f2"></div><div class="a" style="left:300px;top:485px;width:12px;height:12px;background:#f2f2f2"></div><div class="a" style="left:312px;top:485px;width:12px;height:12px;background:#f2f2f2"></div><div class="a" style="left:324px;top:485px;width:12px;height:12px;background:#f2f2f2"></div><div class="a" style="left:336px;top:485px;width:12px;height:12px;background:#f2f2f2"></div><div class="a" style="left:348px;top:485px;width:12px;height:12px;background:#f2f2f2"></div><div class="a" style="left:360px;top:485px;width:12px;height:12px;background:#f2f2f2"></div><div class="a" style="left:372px;top:485px;width:12px;height:12px;background:#f2f2f2"></div><div class="a" style="left:384px;top:485px;width:12px;height:12px;background:#f2f2f2"></div><div class="a" style="left:396px;top:485px;width:12px;height:12px;background:#f2f2f2"></div><div class="a" style="left:408px;top:485px;width:12px;height:12px;background:#f2f2f2"></div><div class="a" style="left:300px;top:497px;width:12px;height:12px;background:#e7e7e8"></div><div class="a" style="left:312px;top:497px;width:12px;height:12px;background:#cacacc"></div><div class="a" style="left:324px;top:497px;width:12px;height:12px;background:#cacacc"></div><div class="a" style="left:336px;top:497px;width:12px;height:12px;background:#e7e7e8"></div><div class="a" style="left:348px;top:497px;width:12px;height:12px;background:#fafafa"></div><div class="a" style="left:360px;top:497px;width:12px;height:12px;background:#fafafa"></div><div class="a" style="left:372px;top:497px;width:12px;height:12px;background:#cacacc"></div><div class="a" style="left:384px;top:497px;width:12px;height:12px;background:#cacacc"></div><div class="a" style="left:396px;top:497px;width:12px;height:12px;background:#d8d8da"></div><div class="a" style="left:408px;top:497px;width:12px;height:12px;background:#fafafa"></div><div class="a" style="left:300px;top:509px;width:12px;height:12px;background:#f2f2f2"></div><div class="a" style="left:312px;top:509px;width:12px;height:12px;background:#f2f2f2"></div><div class="a" style="left:324px;top:509px;width:12px;height:12px;background:#f2f2f2"></div><div class="a" style="left:336px;top:509px;width:12px;height:12px;background:#f2f2f2"></div><div class="a" style="left:348px;top:509px;width:12px;height:12px;background:#f2f2f2"></div><div class="a" style="left:360px;top:509px;width:12px;height:12px;background:#f2f2f2"></div><div class="a" style="left:372px;top:509px;width:12px;height:12px;background:#f2f2f2"></div><div class="a" style="left:384px;top:509px;width:12px;height:12px;background:#f2f2f2"></div><div class="a" style="left:396px;top:509px;width:12px;height:12px;background:#f2f2f2"></div><div class="a" style="left:408px;top:509px;width:12px;height:12px;background:#f2f2f2"></div><div class="a" style="left:300px;top:521px;width:12px;height:12px;background:#f2f2f2"></div><div class="a" style="left:312px;top:521px;width:12px;height:12px;background:#d8d8da"></div><div class="a" style="left:324px;top:521px;width:12px;height:12px;background:#e7e7e8"></div><div class="a" style="left:336px;top:521px;width:12px;height:12px;background:#fafafa"></div><div class="a" style="left:348px;top:521px;width:12px;height:12px;background:#fafafa"></div><div class="a" style="left:360px;top:521px;width:12px;height:12px;background:#fafafa"></div><div class="a" style="left:372px;top:521px;width:12px;height:12px;background:#d8d8da"></div><div class="a" style="left:384px;top:521px;width:12px;height:12px;background:#e7e7e8"></div><div class="a" style="left:396px;top:521px;width:12px;height:12px;background:#e7e7e8"></div><div class="a" style="left:408px;top:521px;width:12px;height:12px;background:#fafafa"></div><div class="a" style="left:300px;top:533px;width:12px;height:12px;background:#f2f2f2"></div><div class="a" style="left:312px;top:533px;width:12px;height:12px;background:#e7e7e8"></div><div class="a" style="left:324px;top:533px;width:12px;height:12px;background:#e7e7e8"></div><div class="a" style="left:336px;top:533px;width:12px;height:12px;background:#f2f2f2"></div><div class="a" style="left:348px;top:533px;width:12px;height:12px;background:#fafafa"></div><div class="a" style="left:360px;top:533px;width:12px;height:12px;background:#fafafa"></div><div class="a" style="left:372px;top:533px;width:12px;height:12px;background:#d8d8da"></div><div class="a" style="left:384px;top:533px;width:12px;height:12px;background:#e7e7e8"></div><div class="a" style="left:396px;top:533px;width:12px;height:12px;background:#f2f2f2"></div><div class="a" style="left:408px;top:533px;width:12px;height:12px;background:#fafafa"></div><div class="a" style="left:300px;top:545px;width:12px;height:12px;background:#f2f2f2"></div><div class="a" style="left:312px;top:545px;width:12px;height:12px;background:#f2f2f2"></div><div class="a" style="left:324px;top:545px;width:12px;height:12px;background:#f2f2f2"></div><div class="a" style="left:336px;top:545px;width:12px;height:12px;background:#f2f2f2"></div><div class="a" style="left:348px;top:545px;width:12px;height:12px;background:#e7e7e8"></div><div class="a" style="left:360px;top:545px;width:12px;height:12px;background:#f2f2f2"></div><div class="a" style="left:372px;top:545px;width:12px;height:12px;background:#f2f2f2"></div><div class="a" style="left:384px;top:545px;width:12px;height:12px;background:#f2f2f2"></div><div class="a" style="left:396px;top:545px;width:12px;height:12px;background:#f2f2f2"></div><div class="a" style="left:408px;top:545px;width:12px;height:12px;background:#f2f2f2"></div><div class="a" style="left:300px;top:557px;width:12px;height:12px;background:#f2f2f2"></div><div class="a" style="left:312px;top:557px;width:12px;height:12px;background:#d8d8da"></div><div class="a" style="left:324px;top:557px;width:12px;height:12px;background:#d8d8da"></div><div class="a" style="left:336px;top:557px;width:12px;height:12px;background:#f2f2f2"></div><div class="a" style="left:348px;top:557px;width:12px;height:12px;background:#e7e7e8"></div><div class="a" style="left:360px;top:557px;width:12px;height:12px;background:#d8d8da"></div><div class="a" style="left:372px;top:557px;width:12px;height:12px;background:#e7e7e8"></div><div class="a" style="left:384px;top:557px;width:12px;height:12px;background:#d8d8da"></div><div class="a" style="left:396px;top:557px;width:12px;height:12px;background:#e7e7e8"></div><div class="a" style="left:408px;top:557px;width:12px;height:12px;background:#f2f2f2"></div><div class="a" style="left:300px;top:569px;width:12px;height:12px;background:#f2f2f2"></div><div class="a" style="left:312px;top:569px;width:12px;height:12px;background:#f2f2f2"></div><div class="a" style="left:324px;top:569px;width:12px;height:12px;background:#f2f2f2"></div><div class="a" style="left:336px;top:569px;width:12px;height:12px;background:#f2f2f2"></div><div class="a" style="left:348px;top:569px;width:12px;height:12px;background:#f2f2f2"></div><div class="a" style="left:360px;top:569px;width:12px;height:12px;background:#f2f2f2"></div><div class="a" style="left:372px;top:569px;width:12px;height:12px;background:#f2f2f2"></div><div class="a" style="left:384px;top:569px;width:12px;height:12px;background:#f2f2f2"></div><div class="a" style="left:396px;top:569px;width:12px;height:12px;background:#f2f2f2"></div><div class="a" style="left:408px;top:569px;width:12px;height:12px;background:#f2f2f2"></div><div class="a" style="left:300px;top:581px;width:12px;height:12px;background:#e7e7e8"></div><div class="a" style="left:312px;top:581px;width:12px;height:12px;background:#cacacc"></div><div class="a" style="left:324px;top:581px;width:12px;height:12px;background:#cacacc"></div><div class="a" style="left:336px;top:581px;width:12px;height:12px;background:#f2f2f2"></div><div class="a" style="left:348px;top:581px;width:12px;height:12px;background:#fafafa"></div><div class="a" style="left:360px;top:581px;width:12px;height:12px;background:#cacacc"></div><div class="a" style="left:372px;top:581px;width:12px;height:12px;background:#cacacc"></div><div class="a" style="left:384px;top:581px;width:12px;height:12px;background:#cacacc"></div><div class="a" style="left:396px;top:581px;width:12px;height:12px;background:#d8d8da"></div><div class="a" style="left:408px;top:581px;width:12px;height:12px;background:#d8d8da"></div><div class="a" style="left:300px;top:593px;width:12px;height:12px;background:#f2f2f2"></div><div class="a" style="left:312px;top:593px;width:12px;height:12px;background:#f2f2f2"></div><div class="a" style="left:324px;top:593px;width:12px;height:12px;background:#f2f2f2"></div><div class="a" style="left:336px;top:593px;width:12px;height:12px;background:#f2f2f2"></div><div class="a" style="left:348px;top:593px;width:12px;height:12px;background:#f2f2f2"></div><div class="a" style="left:360px;top:593px;width:12px;height:12px;background:#f2f2f2"></div><div class="a" style="left:372px;top:593px;width:12px;height:12px;background:#f2f2f2"></div><div class="a" style="left:384px;top:593px;width:12px;height:12px;background:#f2f2f2"></div><div class="a" style="left:396px;top:593px;width:12px;height:12px;background:#f2f2f2"></div><div class="a" style="left:408px;top:593px;width:12px;height:12px;background:#f2f2f2"></div><div class="a" style="left:300px;top:605px;width:12px;height:12px;background:#e7e7e8"></div><div class="a" style="left:312px;top:605px;width:12px;height:12px;background:#cacacc"></div><div class="a" style="left:324px;top:605px;width:12px;height:12px;background:#cacacc"></div><div class="a" style="left:336px;top:605px;width:12px;height:12px;background:#e7e7e8"></div><div class="a" style="left:348px;top:605px;width:12px;height:12px;background:#fafafa"></div><div class="a" style="left:360px;top:605px;width:12px;height:12px;background:#e7e7e8"></div><div class="a" style="left:372px;top:605px;width:12px;height:12px;background:#d8d8da"></div><div class="a" style="left:384px;top:605px;width:12px;height:12px;background:#d8d8da"></div><div class="a" style="left:396px;top:605px;width:12px;height:12px;background:#cacacc"></div><div class="a" style="left:408px;top:605px;width:12px;height:12px;background:#fafafa"></div><div class="a" style="left:300px;top:617px;width:12px;height:12px;background:#f2f2f2"></div><div class="a" style="left:312px;top:617px;width:12px;height:12px;background:#e7e7e8"></div><div class="a" style="left:324px;top:617px;width:12px;height:12px;background:#e7e7e8"></div><div class="a" style="left:336px;top:617px;width:12px;height:12px;background:#f2f2f2"></div><div class="a" style="left:348px;top:617px;width:12px;height:12px;background:#f2f2f2"></div><div class="a" style="left:360px;top:617px;width:12px;height:12px;background:#f2f2f2"></div><div class="a" style="left:372px;top:617px;width:12px;height:12px;background:#e7e7e8"></div><div class="a" style="left:384px;top:617px;width:12px;height:12px;background:#e7e7e8"></div><div class="a" style="left:396px;top:617px;width:12px;height:12px;background:#e7e7e8"></div><div class="a" style="left:408px;top:617px;width:12px;height:12px;background:#f2f2f2"></div><div class="a" style="left:300px;top:629px;width:12px;height:12px;background:#f2f2f2"></div><div class="a" style="left:312px;top:629px;width:12px;height:12px;background:#d8d8da"></div><div class="a" style="left:324px;top:629px;width:12px;height:12px;background:#e7e7e8"></div><div class="a" style="left:336px;top:629px;width:12px;height:12px;background:#fafafa"></div><div class="a" style="left:348px;top:629px;width:12px;height:12px;background:#e7e7e8"></div><div class="a" style="left:360px;top:629px;width:12px;height:12px;background:#e7e7e8"></div><div class="a" style="left:372px;top:629px;width:12px;height:12px;background:#e7e7e8"></div><div class="a" style="left:384px;top:629px;width:12px;height:12px;background:#e7e7e8"></div><div class="a" style="left:396px;top:629px;width:12px;height:12px;background:#e7e7e8"></div><div class="a" style="left:408px;top:629px;width:12px;height:12px;background:#f2f2f2"></div><div class="a" style="left:300px;top:641px;width:12px;height:12px;background:#f2f2f2"></div><div class="a" style="left:312px;top:641px;width:12px;height:12px;background:#e7e7e8"></div><div class="a" style="left:324px;top:641px;width:12px;height:12px;background:#e7e7e8"></div><div class="a" style="left:336px;top:641px;width:12px;height:12px;background:#fafafa"></div><div class="a" style="left:348px;top:641px;width:12px;height:12px;background:#e7e7e8"></div><div class="a" style="left:360px;top:641px;width:12px;height:12px;background:#e7e7e8"></div><div class="a" style="left:372px;top:641px;width:12px;height:12px;background:#f2f2f2"></div><div class="a" style="left:384px;top:641px;width:12px;height:12px;background:#e7e7e8"></div><div class="a" style="left:396px;top:641px;width:12px;height:12px;background:#f2f2f2"></div><div class="a" style="left:408px;top:641px;width:12px;height:12px;background:#f2f2f2"></div><div class="a" style="left:300px;top:653px;width:12px;height:12px;background:#f2f2f2"></div><div class="a" style="left:312px;top:653px;width:12px;height:12px;background:#e7e7e8"></div><div class="a" style="left:324px;top:653px;width:12px;height:12px;background:#e7e7e8"></div><div class="a" style="left:336px;top:653px;width:12px;height:12px;background:#f2f2f2"></div><div class="a" style="left:348px;top:653px;width:12px;height:12px;background:#e7e7e8"></div><div class="a" style="left:360px;top:653px;width:12px;height:12px;background:#e7e7e8"></div><div class="a" style="left:372px;top:653px;width:12px;height:12px;background:#e7e7e8"></div><div class="a" style="left:384px;top:653px;width:12px;height:12px;background:#e7e7e8"></div><div class="a" style="left:396px;top:653px;width:12px;height:12px;background:#e7e7e8"></div><div class="a" style="left:408px;top:653px;width:12px;height:12px;background:#f2f2f2"></div><div class="a" style="left:300px;top:665px;width:12px;height:12px;background:#f2f2f2"></div><div class="a" style="left:312px;top:665px;width:12px;height:12px;background:#cacacc"></div><div class="a" style="left:324px;top:665px;width:12px;height:12px;background:#d8d8da"></div><div class="a" style="left:336px;top:665px;width:12px;height:12px;background:#fafafa"></div><div class="a" style="left:348px;top:665px;width:12px;height:12px;background:#e7e7e8"></div><div class="a" style="left:360px;top:665px;width:12px;height:12px;background:#d8d8da"></div><div class="a" style="left:372px;top:665px;width:12px;height:12px;background:#e7e7e8"></div><div class="a" style="left:384px;top:665px;width:12px;height:12px;background:#e7e7e8"></div><div class="a" style="left:396px;top:665px;width:12px;height:12px;background:#e7e7e8"></div><div class="a" style="left:408px;top:665px;width:12px;height:12px;background:#f2f2f2"></div>
<div class="a" style="left:305px;top:300px;width:28px;height:12px;border-radius:14px 14px 0 0;background:#ececec"></div>
<div class="a" style="left:377px;top:296px;width:36px;height:14px;border-radius:18px 18px 0 0;background:#e8e8e8"></div>
<svg class="a" style="left:0;top:0" width="1552" height="686">
<path d="M119.3 172.6 L121.2 172.9 L189.9 269.9 L191.7 265.1 L193.5 283.4 L177.1 274.2 L181.1 273.5 Z" fill="#ff1e12"/>
<path d="M441.2 92.4 L442.6 93.6 L343.7 198.9 L348 199.5 L331.4 205.3 L335.5 188.1 L337.3 192.8 Z" fill="#ff1e12"/>
<path d="M147.9 262 V278 M148 262.6 L143.2 265.9" stroke="#ff1414" stroke-width="2.3" fill="none"/>
<path d="M412.5 145.4 Q414.5 142.8 417 142.8 Q421 142.8 421 146.6 Q421 149.2 418 151.6 L413 156.1 H422.2" stroke="#ff1414" stroke-width="2.1" fill="none" stroke-linejoin="round"/>
</svg></body></html>
